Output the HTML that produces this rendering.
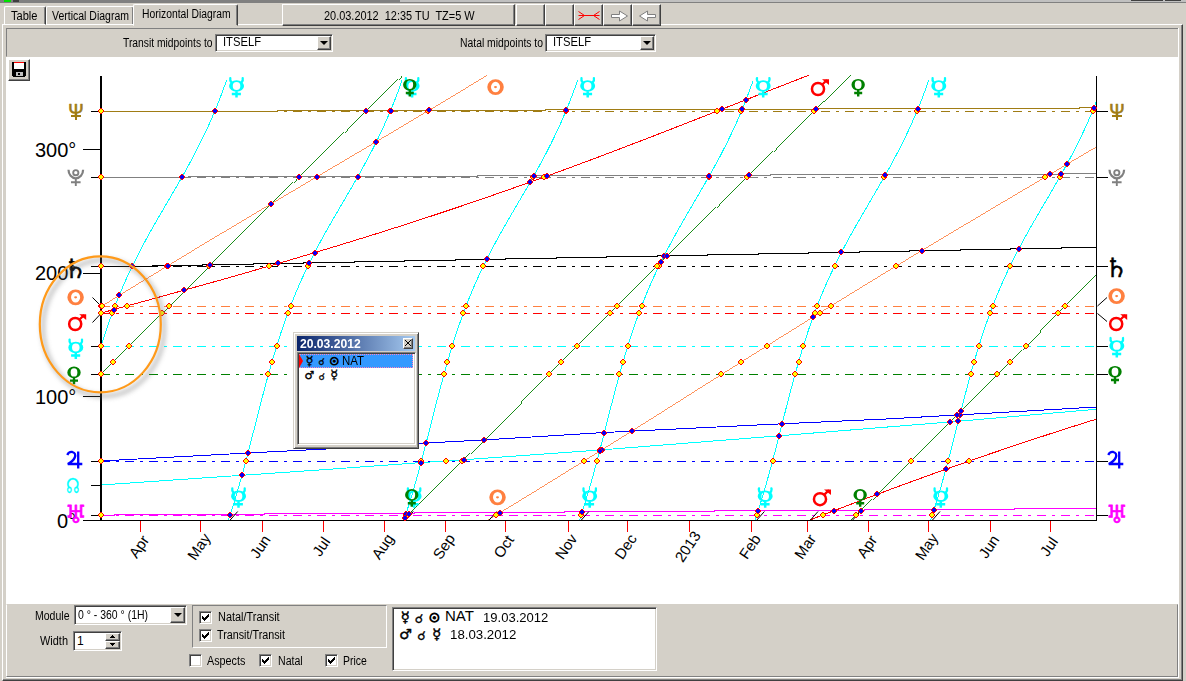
<!DOCTYPE html><html><head><meta charset="utf-8"><title>Horizontal Diagram</title><style>
*{box-sizing:border-box}
html,body{margin:0;padding:0}
body{width:1186px;height:681px;overflow:hidden;position:relative;background:#d4d0c8;font:11px "Liberation Sans",sans-serif;color:#000}
.a{position:absolute}
.t{position:absolute;white-space:nowrap;line-height:13px}
.raised{border:1px solid;border-color:#fff #404040 #404040 #fff;box-shadow:inset -1px -1px 0 #808080}
.sunk{border:1px solid;border-color:#808080 #fff #fff #808080}
.field{background:#fff;border:1px solid;border-color:#808080 #fff #fff #808080;box-shadow:inset 1px 1px 0 #404040,inset -1px -1px 0 #d4d0c8}
.btn{background:#d4d0c8;border:1px solid;border-color:#fff #404040 #404040 #fff;box-shadow:inset -1px -1px 0 #808080}
.cb{position:absolute;width:13px;height:13px;background:#fff;border:1px solid;border-color:#808080 #fff #fff #808080;box-shadow:inset 1px 1px 0 #404040,inset -1px -1px 0 #d4d0c8}
.cb svg{position:absolute;left:2px;top:2px}
.arrow{position:absolute;width:0;height:0;border:4px solid transparent;border-top-color:#000;border-bottom-width:0}
svg text.ps{font:bold 20px "DejaVu Sans",sans-serif;text-anchor:middle;stroke-width:1.2px;stroke-linejoin:round}
svg text.mo{font:15px "Liberation Sans",sans-serif;fill:#000}
svg text.deg{font:20px "Liberation Sans",sans-serif;fill:#000}
svg text.psi{font:21px "Liberation Sans",sans-serif;text-anchor:middle;stroke-width:.7px}
svg text.nd{font:21px "DejaVu Sans",sans-serif;text-anchor:middle}
svg text.pl{font:bold 22px "DejaVu Sans",sans-serif;text-anchor:middle;stroke-width:1.2px;stroke-linejoin:round}
</style></head><body>
<div class="a" style="left:0;top:0;width:1186px;height:3px;background:#808080"></div>
<div class="a" style="left:0;top:0;width:1186px;height:2px;background:#c0c0c0"></div>
<div class="a" style="left:0;top:0;width:400px;height:3px;background:#808080"></div>
<div class="a" style="left:4px;top:0;width:7px;height:2px;background:#00e000"></div>
<div class="a" style="left:13px;top:0;width:6px;height:2px;background:#404040"></div>
<div class="a" style="left:1131px;top:0;width:32px;height:1px;background:#404040"></div>
<div class="a" style="left:1165px;top:0;width:16px;height:1px;background:#404040"></div>
<div class="a" style="left:2px;top:24px;width:1181px;height:657px;border:1px solid;border-color:#fff #404040 #404040 #fff;box-shadow:inset -1px -1px 0 #808080"></div>
<div class="a" style="left:4px;top:6px;width:42px;height:19px;border:1px solid;border-color:#fff #404040 transparent #fff;border-radius:2px 2px 0 0;box-shadow:inset -1px 0 0 #808080"></div>
<div class="t" style="left:11px;top:10px;font-size:12px;transform:scaleX(0.9237);transform-origin:0 0;">Table</div>
<div class="a" style="left:46px;top:6px;width:88px;height:19px;border:1px solid;border-color:#fff #404040 transparent #fff;border-radius:2px 2px 0 0;box-shadow:inset -1px 0 0 #808080"></div>
<div class="t" style="left:52px;top:10px;font-size:12px;transform:scaleX(0.8745);transform-origin:0 0;">Vertical Diagram</div>
<div class="a" style="left:133px;top:4px;width:105px;height:22px;background:#d4d0c8;border:1px solid;border-color:#fff #404040 #d4d0c8 #fff;border-radius:2px 2px 0 0;box-shadow:inset -1px 0 0 #808080"></div>
<div class="t" style="left:141.5px;top:8px;font-size:12px;transform:scaleX(0.8616);transform-origin:0 0;">Horizontal Diagram</div>
<div class="a btn" style="left:282px;top:4px;width:233px;height:22px"></div>
<div class="t" style="left:324px;top:10px;font-size:12px;transform:scaleX(0.9107);transform-origin:0 0;">20.03.2012&nbsp; 12:35 TU&nbsp; TZ=5 W</div>
<div class="a btn" style="left:516px;top:4px;width:29px;height:22px"></div>
<div class="a btn" style="left:545px;top:4px;width:29px;height:22px"></div>
<div class="a btn" style="left:574px;top:4px;width:29px;height:22px"></div>
<div class="a btn" style="left:603px;top:4px;width:29px;height:22px"></div>
<div class="a btn" style="left:632px;top:4px;width:29px;height:22px"></div>
<svg class="a" style="left:574px;top:4px" width="90" height="22" viewBox="0 0 90 22"><path d="M4.5 11.5H25.5M4.5 7.5l6 4l-6 4M25.500 7.5l-6 4l6 4" stroke="#f00" fill="none"/><path d="M37.5 10.500h8v-3.500l8 5l-8 5v-3.500h-8z" fill="#fff" stroke="#808080"/><path d="M81.500 10.500h-8v-3.500l-8 5l8 5v-3.500h8z" fill="#fff" stroke="#808080"/></svg>
<div class="a" style="left:6px;top:28px;width:1173px;height:29px;border:1px solid;border-color:#808080 #fff #d4d0c8 #808080"></div>
<div class="a" style="left:1178px;top:28px;width:1px;height:650px;background:#fff"></div>
<div class="a" style="left:6px;top:677px;width:1173px;height:1px;background:#fff"></div>
<div class="a" style="left:6px;top:604px;width:1172px;height:73px;border:1px solid;border-color:#d4d0c8 #808080 #808080 #fff"></div>
<div class="a" style="left:6px;top:57px;width:1172px;height:547px;background:#fff"></div>
<div class="t" style="left:122.5px;top:37px;font-size:12px;transform:scaleX(0.8585);transform-origin:0 0;">Transit midpoints to</div>
<div class="a field" style="left:215px;top:34px;width:118px;height:18px"></div>
<div class="t" style="left:222.5px;top:36px;font-size:12px;transform:scaleX(0.9347);transform-origin:0 0;">ITSELF</div>
<div class="a btn" style="left:317px;top:36px;width:14px;height:14px"></div><div class="arrow" style="left:320px;top:41px"></div>
<div class="t" style="left:459.5px;top:37px;font-size:12px;transform:scaleX(0.8643);transform-origin:0 0;">Natal midpoints to</div>
<div class="a field" style="left:545px;top:34px;width:111px;height:18px"></div>
<div class="t" style="left:552.5px;top:36px;font-size:12px;transform:scaleX(0.9347);transform-origin:0 0;">ITSELF</div>
<div class="a btn" style="left:640px;top:36px;width:14px;height:14px"></div><div class="arrow" style="left:643px;top:41px"></div>
<div class="a btn" style="left:8px;top:59px;width:22px;height:22px"></div>
<svg class="a" style="left:11px;top:62px" width="16" height="16" viewBox="0 0 16 16" shape-rendering="crispEdges"><path d="M1 0h14v14h-1v1h-12v-1h-1z" fill="#000"/><rect x="3" y="0" width="10" height="1" fill="#f00"/><rect x="3" y="1" width="10" height="6" fill="#fff"/><rect x="5" y="10" width="7" height="4" fill="#c0c0c0"/><rect x="7" y="11" width="2" height="2" fill="#000"/></svg>
<div class="t" style="left:34.5px;top:610px;font-size:12px;transform:scaleX(0.8765);transform-origin:0 0;">Module</div>
<div class="a field" style="left:74px;top:605px;width:113px;height:20px"></div>
<div class="t" style="left:77.5px;top:609px;font-size:12px;transform:scaleX(0.8721);transform-origin:0 0;">0 ° - 360 ° (1H)</div>
<div class="a btn" style="left:170px;top:607px;width:15px;height:16px"></div><div class="arrow" style="left:174px;top:613px"></div>
<div class="t" style="left:40px;top:635px;font-size:12px;transform:scaleX(0.9129);transform-origin:0 0;">Width</div>
<div class="a field" style="left:73px;top:631px;width:49px;height:20px"></div>
<div class="t" style="left:77px;top:635px;font-size:12px;">1</div>
<div class="a btn" style="left:105px;top:633px;width:15px;height:8px"></div><div class="a btn" style="left:105px;top:641px;width:15px;height:8px"></div>
<svg class="a" style="left:108px;top:635px" width="9" height="12" viewBox="0 0 9 12" shape-rendering="crispEdges"><path d="M4 0h1v1h1v1h1v1h-5v-1h1v-1h1zM2 8h5v1h-1v1h-1v1h-1v-1h-1v-1h-1z" fill="#000"/></svg>
<div class="a sunk" style="left:192px;top:605px;width:195px;height:43px"></div>
<div class="cb" style="left:199px;top:611px"><svg width="7" height="7" viewBox="0 0 7 7"><path d="M0 2v3l2 2l5-5v-3l-5 5z" fill="#000" shape-rendering="crispEdges"/></svg></div>
<div class="t" style="left:217.5px;top:611px;font-size:12px;transform:scaleX(0.9115);transform-origin:0 0;">Natal/Transit</div>
<div class="cb" style="left:199px;top:629px"><svg width="7" height="7" viewBox="0 0 7 7"><path d="M0 2v3l2 2l5-5v-3l-5 5z" fill="#000" shape-rendering="crispEdges"/></svg></div>
<div class="t" style="left:217.3px;top:629px;font-size:12px;transform:scaleX(0.8971);transform-origin:0 0;">Transit/Transit</div>
<div class="cb" style="left:189px;top:654px"></div>
<div class="t" style="left:207px;top:655px;font-size:12px;transform:scaleX(0.8999);transform-origin:0 0;">Aspects</div>
<div class="cb" style="left:259px;top:654px"><svg width="7" height="7" viewBox="0 0 7 7"><path d="M0 2v3l2 2l5-5v-3l-5 5z" fill="#000" shape-rendering="crispEdges"/></svg></div>
<div class="t" style="left:277.8px;top:655px;font-size:12px;transform:scaleX(0.8817);transform-origin:0 0;">Natal</div>
<div class="cb" style="left:325px;top:654px"><svg width="7" height="7" viewBox="0 0 7 7"><path d="M0 2v3l2 2l5-5v-3l-5 5z" fill="#000" shape-rendering="crispEdges"/></svg></div>
<div class="t" style="left:343.3px;top:655px;font-size:12px;transform:scaleX(0.8667);transform-origin:0 0;">Price</div>
<div class="a field" style="left:392px;top:607px;width:265px;height:64px"></div>
<div class="t" style="left:445px;top:607px;font-size:15px;line-height:18px">NAT</div>
<div class="t" style="left:482.5px;top:609.5px;font-size:13px;transform:scaleX(1.0032);transform-origin:0 0;line-height:16px;">19.03.2012</div>
<div class="t" style="left:449.6px;top:626.5px;font-size:13px;transform:scaleX(1.0201);transform-origin:0 0;line-height:16px;">18.03.2012</div>
<svg class="a" style="left:0;top:0" width="1186" height="681" viewBox="0 0 1186 681">
<text x="400.77" y="621.74" font-family="DejaVu Sans, sans-serif" font-weight="bold" font-size="14.40" fill="#000" stroke="#000" stroke-width="0.50" stroke-linejoin="round">☿</text>
<text x="414.73" y="622.59" font-family="DejaVu Sans, sans-serif" font-weight="normal" font-size="12.74" fill="#000" stroke="#000" stroke-width="0.30" stroke-linejoin="round">☌</text>
<text x="428.99" y="621.55" font-family="DejaVu Sans, sans-serif" font-weight="normal" font-size="11.97" fill="#000" stroke="#000" stroke-width="1.30" stroke-linejoin="round">☉</text>
<text x="399.32" y="638.84" font-family="DejaVu Sans, sans-serif" font-weight="bold" font-size="13.92" fill="#000" stroke="#000" stroke-width="0.50" stroke-linejoin="round">♂</text>
<text x="417.18" y="639.59" font-family="DejaVu Sans, sans-serif" font-weight="normal" font-size="12.74" fill="#000" stroke="#000" stroke-width="0.30" stroke-linejoin="round">☌</text>
<text x="432.21" y="638.60" font-family="DejaVu Sans, sans-serif" font-weight="bold" font-size="14.76" fill="#000" stroke="#000" stroke-width="0.50" stroke-linejoin="round">☿</text>
</svg>
<svg class="a" style="left:0;top:0" width="1186" height="681" viewBox="0 0 1186 681">
<defs><filter id="sh" x="-20%" y="-20%" width="150%" height="150%"><feGaussianBlur stdDeviation="2.500"/></filter></defs>
<line x1="101" y1="111.5" x2="1097" y2="111.5" stroke="#a07c14" stroke-width="1" stroke-dasharray="9 6 3 6" shape-rendering="crispEdges"/>
<line x1="101" y1="177.5" x2="1097" y2="177.5" stroke="#808080" stroke-width="1" stroke-dasharray="9 6 3 6" shape-rendering="crispEdges"/>
<line x1="101" y1="266.5" x2="1097" y2="266.5" stroke="#000000" stroke-width="1" stroke-dasharray="9 6 3 6" shape-rendering="crispEdges"/>
<line x1="101" y1="306.5" x2="1097" y2="306.5" stroke="#ff8040" stroke-width="1" stroke-dasharray="9 6 3 6" shape-rendering="crispEdges"/>
<line x1="101" y1="313.5" x2="1097" y2="313.5" stroke="#ff0000" stroke-width="1" stroke-dasharray="9 6 3 6" shape-rendering="crispEdges"/>
<line x1="101" y1="346.5" x2="1097" y2="346.5" stroke="#00ffff" stroke-width="1" stroke-dasharray="9 6 3 6" shape-rendering="crispEdges"/>
<line x1="101" y1="374.5" x2="1097" y2="374.5" stroke="#008000" stroke-width="1" stroke-dasharray="9 6 3 6" shape-rendering="crispEdges"/>
<line x1="101" y1="461.5" x2="1097" y2="461.5" stroke="#0000ff" stroke-width="1" stroke-dasharray="9 6 3 6" shape-rendering="crispEdges"/>
<line x1="101" y1="515.5" x2="1097" y2="515.5" stroke="#ff00ff" stroke-width="1" stroke-dasharray="9 6 3 6" shape-rendering="crispEdges"/>
<path d="M101 266.5H153M152 265.5H203M202 264.5H254M253 263.5H304M303 262.5H355M354 261.5H405M404 260.5H456M455 259.5H506M505 258.5H557M556 257.5H607M606 256.5H658M657 255.5H708M707 254.5H759M758 253.5H809M808 252.5H860M859 251.5H910M909 250.5H961M960 249.5H1011M1010 248.5H1062M1061 247.5H1097" stroke="#000000" stroke-width="1" fill="none" shape-rendering="crispEdges"/>
<polyline points="101.0,461.0 248.0,453.0 326.0,449.0 426.0,443.0 483.0,440.0 604.5,432.5 782.0,423.8 890.0,418.8 1097.0,407.0" fill="none" stroke="#0000ff" stroke-width="1" shape-rendering="crispEdges"/>
<polyline points="101.0,485.0 326.0,469.5 421.0,462.6 446.0,461.0 600.0,450.0 779.0,435.8 890.0,426.8 950.0,422.0 1097.0,409.2" fill="none" stroke="#00ffff" stroke-width="1" shape-rendering="crispEdges"/>
<path d="M101 515.5H115M114 514.5H265M264 513.5H415M414 512.5H565M564 511.5H715M714 510.5H865M864 509.5H1015M1014 508.5H1097" stroke="#ff00ff" stroke-width="1" fill="none" shape-rendering="crispEdges"/>
<path d="M101 111.5H278M277 110.5H546M545 109.5H815M814 108.5H1080M1079 107.5H1097" stroke="#a07c14" stroke-width="1" fill="none" shape-rendering="crispEdges"/>
<path d="M101 177.5H189M188 176.5H478M477 175.5H771M770 174.5H1061M1060 173.5H1097" stroke="#808080" stroke-width="1" fill="none" shape-rendering="crispEdges"/>
<polyline points="101.0,346.5 104.0,337.0 107.0,328.0 110.0,319.4 113.0,311.2 116.0,303.3 119.0,295.9 122.0,288.7 125.0,281.8 128.0,275.2 131.0,268.8 134.0,262.7 137.0,256.7 140.0,250.9 143.0,245.2 146.0,239.6 149.0,234.2 152.0,228.8 155.0,223.6 158.0,218.3 161.0,213.2 164.0,208.0 167.0,202.9 170.0,197.8 173.0,192.6 176.0,187.5 179.0,182.3 182.0,177.0 185.0,171.7 188.0,166.3 191.0,160.8 194.0,155.1 197.0,149.4 200.0,143.4 203.0,137.3 206.0,131.0 209.0,124.5 212.0,117.7 215.0,110.6 218.0,103.2 221.0,95.5 224.0,87.4 226.5,80.5" fill="none" stroke="#00ffff" stroke-width="1" shape-rendering="crispEdges"/>
<polyline points="228.2,520.5 230.0,515.3 233.0,505.9 236.0,496.2 239.0,485.9 242.0,475.3 245.0,464.3 248.0,452.9 251.0,441.3 254.0,429.6 257.0,417.8 260.0,406.1 263.0,394.5 266.0,383.2 269.0,372.3 272.0,361.7 275.0,351.6 278.0,341.9 281.0,332.6 284.0,323.8 287.0,315.4 290.0,307.4 293.0,299.7 296.0,292.4 299.0,285.3 302.0,278.6 305.0,272.1 308.0,265.8 311.0,259.7 314.0,253.8 317.0,248.1 320.0,242.5 323.0,237.0 326.0,231.6 329.0,226.3 332.0,221.0 335.0,215.8 338.0,210.7 341.0,205.6 344.0,200.4 347.0,195.3 350.0,190.2 353.0,185.0 356.0,179.8 359.0,174.5 362.0,169.1 365.0,163.6 368.0,158.1 371.0,152.4 374.0,146.5 377.0,140.5 380.0,134.3 383.0,127.9 386.0,121.2 389.0,114.3 392.0,107.1 395.0,99.6 398.0,91.7 401.0,83.4 402.0,80.5" fill="none" stroke="#00ffff" stroke-width="1" shape-rendering="crispEdges"/>
<polyline points="403.8,520.5 404.0,519.9 407.0,510.8 410.0,501.3 413.0,491.3 416.0,480.9 419.0,470.0 422.0,458.8 425.0,447.4 428.0,435.7 431.0,423.9 434.0,412.1 437.0,400.5 440.0,389.0 443.0,377.9 446.0,367.1 449.0,356.7 452.0,346.8 455.0,337.3 458.0,328.3 461.0,319.7 464.0,311.5 467.0,303.6 470.0,296.1 473.0,288.9 476.0,282.1 479.0,275.4 482.0,269.0 485.0,262.9 488.0,256.9 491.0,251.0 494.0,245.4 497.0,239.8 500.0,234.4 503.0,229.0 506.0,223.7 509.0,218.5 512.0,213.4 515.0,208.2 518.0,203.1 521.0,198.0 524.0,192.8 527.0,187.7 530.0,182.5 533.0,177.2 536.0,171.9 539.0,166.5 542.0,161.0 545.0,155.3 548.0,149.6 551.0,143.7 554.0,137.5 557.0,131.2 560.0,124.7 563.0,117.9 566.0,110.9 569.0,103.5 572.0,95.8 575.0,87.7 577.6,80.5" fill="none" stroke="#00ffff" stroke-width="1" shape-rendering="crispEdges"/>
<polyline points="579.4,520.5 581.0,515.6 584.0,506.3 587.0,496.5 590.0,486.3 593.0,475.7 596.0,464.7 599.0,453.3 602.0,441.7 605.0,430.0 608.0,418.2 611.0,406.5 614.0,394.9 617.0,383.6 620.0,372.6 623.0,362.0 626.0,351.9 629.0,342.2 632.0,332.9 635.0,324.1 638.0,315.7 641.0,307.6 644.0,299.9 647.0,292.6 650.0,285.6 653.0,278.8 656.0,272.3 659.0,266.0 662.0,259.9 665.0,254.0 668.0,248.3 671.0,242.7 674.0,237.2 677.0,231.8 680.0,226.5 683.0,221.2 686.0,216.0 689.0,210.9 692.0,205.7 695.0,200.6 698.0,195.5 701.0,190.3 704.0,185.2 707.0,179.9 710.0,174.6 713.0,169.3 716.0,163.8 719.0,158.3 722.0,152.6 725.0,146.7 728.0,140.7 731.0,134.5 734.0,128.1 737.0,121.5 740.0,114.6 743.0,107.3 746.0,99.8 749.0,91.9 752.0,83.7 753.1,80.5" fill="none" stroke="#00ffff" stroke-width="1" shape-rendering="crispEdges"/>
<polyline points="754.9,520.5 755.0,520.2 758.0,511.1 761.0,501.6 764.0,491.6 767.0,481.2 770.0,470.4 773.0,459.2 776.0,447.8 779.0,436.1 782.0,424.3 785.0,412.5 788.0,400.9 791.0,389.4 794.0,378.3 797.0,367.5 800.0,357.1 803.0,347.1 806.0,337.7 809.0,328.6 812.0,320.0 815.0,311.7 818.0,303.9 821.0,296.4 824.0,289.2 827.0,282.3 830.0,275.7 833.0,269.3 836.0,263.1 839.0,257.1 842.0,251.2 845.0,245.6 848.0,240.0 851.0,234.6 854.0,229.2 857.0,223.9 860.0,218.7 863.0,213.5 866.0,208.4 869.0,203.3 872.0,198.1 875.0,193.0 878.0,187.8 881.0,182.6 884.0,177.4 887.0,172.1 890.0,166.7 893.0,161.2 896.0,155.5 899.0,149.8 902.0,143.9 905.0,137.8 908.0,131.5 911.0,124.9 914.0,118.2 917.0,111.1 920.0,103.8 923.0,96.1 926.0,88.0 928.7,80.5" fill="none" stroke="#00ffff" stroke-width="1" shape-rendering="crispEdges"/>
<polyline points="930.5,520.5 932.0,515.9 935.0,506.6 938.0,496.8 941.0,486.7 944.0,476.0 947.0,465.1 950.0,453.7 953.0,442.1 956.0,430.4 959.0,418.6 962.0,406.9 965.0,395.3 968.0,384.0 971.0,373.0 974.0,362.4 977.0,352.2 980.0,342.5 983.0,333.2 986.0,324.4 989.0,315.9 992.0,307.9 995.0,300.2 998.0,292.9 1001.0,285.8 1004.0,279.1 1007.0,272.5 1010.0,266.2 1013.0,260.2 1016.0,254.2 1019.0,248.5 1022.0,242.9 1025.0,237.4 1028.0,232.0 1031.0,226.6 1034.0,221.4 1037.0,216.2 1040.0,211.0 1043.0,205.9 1046.0,200.8 1049.0,195.7 1052.0,190.5 1055.0,185.3 1058.0,180.1 1061.0,174.8 1064.0,169.5 1067.0,164.0 1070.0,158.5 1073.0,152.8 1076.0,146.9 1079.0,140.9 1082.0,134.7 1085.0,128.3 1088.0,121.7 1091.0,114.8 1094.0,107.6 1097.0,100.1" fill="none" stroke="#00ffff" stroke-width="1" shape-rendering="crispEdges"/>
<polyline points="101.0,373.9 104.0,370.9 107.0,367.9 110.0,364.8 113.0,361.8 116.0,358.8 119.0,355.8 122.0,352.8 125.0,349.7 128.0,346.7 131.0,343.7 134.0,340.7 137.0,337.7 140.0,334.7 143.0,331.6 146.0,328.6 149.0,325.6 152.0,322.6 155.0,319.6 158.0,316.6 161.0,313.6 164.0,310.5 167.0,307.5 170.0,304.5 173.0,301.5 176.0,298.5 179.0,295.5 182.0,292.5 185.0,289.5 188.0,286.5 191.0,283.5 194.0,280.5 197.0,277.5 200.0,274.5 203.0,271.5 206.0,268.5 209.0,265.5 212.0,262.5 215.0,259.6 218.0,256.6 221.0,253.6 224.0,250.6 227.0,247.6 230.0,244.6 233.0,241.7 236.0,238.7 239.0,235.7 242.0,232.7 245.0,229.8 248.0,226.8 251.0,223.8 254.0,220.9 257.0,217.9 260.0,215.0 263.0,212.0 266.0,209.0 269.0,206.1 272.0,203.1 275.0,200.2 278.0,197.2 281.0,194.3 284.0,191.3 287.0,188.4 290.0,185.4 293.0,182.5 296.0,179.5 299.0,176.6 302.0,173.6 305.0,170.7 308.0,167.7 311.0,164.8 314.0,161.9 317.0,158.9 320.0,156.0 323.0,153.0 326.0,150.1 329.0,147.2 332.0,144.2 335.0,141.3 338.0,138.3 341.0,135.4 344.0,132.5 347.0,129.5 350.0,126.6 353.0,123.6 356.0,120.7 359.0,117.8 362.0,114.8 365.0,111.9 368.0,108.9 371.0,106.0 374.0,103.1 377.0,100.1 380.0,97.2 383.0,94.2 386.0,91.3 389.0,88.3 392.0,85.4 395.0,82.4 398.0,79.5 401.0,76.5 402.3,75.3" fill="none" stroke="#008000" stroke-width="0.9" shape-rendering="crispEdges"/>
<polyline points="402.3,520.5 404.0,518.8 407.0,515.8 410.0,512.9 413.0,509.9 416.0,507.0 419.0,504.0 422.0,501.0 425.0,498.1 428.0,495.1 431.0,492.2 434.0,489.2 437.0,486.2 440.0,483.3 443.0,480.3 446.0,477.3 449.0,474.3 452.0,471.4 455.0,468.4 458.0,465.4 461.0,462.4 464.0,459.4 467.0,456.4 470.0,453.5 473.0,450.5 476.0,447.5 479.0,444.5 482.0,441.5 485.0,438.5 488.0,435.5 491.0,432.5 494.0,429.5 497.0,426.5 500.0,423.5 503.0,420.5 506.0,417.5 509.0,414.5 512.0,411.5 515.0,408.5 518.0,405.5 521.0,402.5 524.0,399.4 527.0,396.4 530.0,393.4 533.0,390.4 536.0,387.4 539.0,384.4 542.0,381.4 545.0,378.3 548.0,375.3 551.0,372.3 554.0,369.3 557.0,366.3 560.0,363.2 563.0,360.2 566.0,357.2 569.0,354.2 572.0,351.2 575.0,348.1 578.0,345.1 581.0,342.1 584.0,339.1 587.0,336.1 590.0,333.1 593.0,330.0 596.0,327.0 599.0,324.0 602.0,321.0 605.0,318.0 608.0,315.0 611.0,312.0 614.0,308.9 617.0,305.9 620.0,302.9 623.0,299.9 626.0,296.9 629.0,293.9 632.0,290.9 635.0,287.9 638.0,284.9 641.0,281.9 644.0,278.9 647.0,275.9 650.0,272.9 653.0,269.9 656.0,266.9 659.0,263.9 662.0,261.0 665.0,258.0 668.0,255.0 671.0,252.0 674.0,249.0 677.0,246.0 680.0,243.1 683.0,240.1 686.0,237.1 689.0,234.1 692.0,231.2 695.0,228.2 698.0,225.2 701.0,222.3 704.0,219.3 707.0,216.3 710.0,213.4 713.0,210.4 716.0,207.5 719.0,204.5 722.0,201.6 725.0,198.6 728.0,195.6 731.0,192.7 734.0,189.7 737.0,186.8 740.0,183.8 743.0,180.9 746.0,178.0 749.0,175.0 752.0,172.1 755.0,169.1 758.0,166.2 761.0,163.2 764.0,160.3 767.0,157.4 770.0,154.4 773.0,151.5 776.0,148.5 779.0,145.6 782.0,142.7 785.0,139.7 788.0,136.8 791.0,133.8 794.0,130.9 797.0,128.0 800.0,125.0 803.0,122.1 806.0,119.1 809.0,116.2 812.0,113.3 815.0,110.3 818.0,107.4 821.0,104.4 824.0,101.5 827.0,98.6 830.0,95.6 833.0,92.7 836.0,89.7 839.0,86.8 842.0,83.8 845.0,80.9 848.0,77.9 850.7,75.3" fill="none" stroke="#008000" stroke-width="0.9" shape-rendering="crispEdges"/>
<polyline points="850.7,520.5 851.0,520.2 854.0,517.2 857.0,514.3 860.0,511.3 863.0,508.4 866.0,505.4 869.0,502.4 872.0,499.5 875.0,496.5 878.0,493.5 881.0,490.6 884.0,487.6 887.0,484.6 890.0,481.7 893.0,478.7 896.0,475.7 899.0,472.8 902.0,469.8 905.0,466.8 908.0,463.8 911.0,460.8 914.0,457.8 917.0,454.9 920.0,451.9 923.0,448.9 926.0,445.9 929.0,442.9 932.0,439.9 935.0,436.9 938.0,433.9 941.0,430.9 944.0,427.9 947.0,424.9 950.0,421.9 953.0,418.9 956.0,415.9 959.0,412.9 962.0,409.9 965.0,406.9 968.0,403.9 971.0,400.9 974.0,397.8 977.0,394.8 980.0,391.8 983.0,388.8 986.0,385.8 989.0,382.8 992.0,379.8 995.0,376.7 998.0,373.7 1001.0,370.7 1004.0,367.7 1007.0,364.7 1010.0,361.6 1013.0,358.6 1016.0,355.6 1019.0,352.6 1022.0,349.6 1025.0,346.5 1028.0,343.5 1031.0,340.5 1034.0,337.5 1037.0,334.5 1040.0,331.5 1043.0,328.4 1046.0,325.4 1049.0,322.4 1052.0,319.4 1055.0,316.4 1058.0,313.4 1061.0,310.4 1064.0,307.4 1067.0,304.3 1070.0,301.3 1073.0,298.3 1076.0,295.3 1079.0,292.3 1082.0,289.3 1085.0,286.3 1088.0,283.3 1091.0,280.3 1094.0,277.3 1097.0,274.3" fill="none" stroke="#008000" stroke-width="0.9" shape-rendering="crispEdges"/>
<polyline points="101.0,306.7 104.0,304.8 107.0,303.0 110.0,301.1 113.0,299.3 116.0,297.4 119.0,295.6 122.0,293.7 125.0,291.9 128.0,290.1 131.0,288.2 134.0,286.4 137.0,284.5 140.0,282.7 143.0,280.9 146.0,279.0 149.0,277.2 152.0,275.4 155.0,273.6 158.0,271.7 161.0,269.9 164.0,268.1 167.0,266.3 170.0,264.4 173.0,262.6 176.0,260.8 179.0,259.0 182.0,257.2 185.0,255.4 188.0,253.6 191.0,251.8 194.0,249.9 197.0,248.1 200.0,246.3 203.0,244.5 206.0,242.7 209.0,240.9 212.0,239.1 215.0,237.3 218.0,235.5 221.0,233.7 224.0,232.0 227.0,230.2 230.0,228.4 233.0,226.6 236.0,224.8 239.0,223.0 242.0,221.2 245.0,219.4 248.0,217.6 251.0,215.9 254.0,214.1 257.0,212.3 260.0,210.5 263.0,208.7 266.0,206.9 269.0,205.2 272.0,203.4 275.0,201.6 278.0,199.8 281.0,198.0 284.0,196.3 287.0,194.5 290.0,192.7 293.0,190.9 296.0,189.2 299.0,187.4 302.0,185.6 305.0,183.8 308.0,182.1 311.0,180.3 314.0,178.5 317.0,176.8 320.0,175.0 323.0,173.2 326.0,171.4 329.0,169.7 332.0,167.9 335.0,166.1 338.0,164.4 341.0,162.6 344.0,160.8 347.0,159.0 350.0,157.3 353.0,155.5 356.0,153.7 359.0,151.9 362.0,150.2 365.0,148.4 368.0,146.6 371.0,144.8 374.0,143.1 377.0,141.3 380.0,139.5 383.0,137.7 386.0,135.9 389.0,134.2 392.0,132.4 395.0,130.6 398.0,128.8 401.0,127.0 404.0,125.3 407.0,123.5 410.0,121.7 413.0,119.9 416.0,118.1 419.0,116.3 422.0,114.5 425.0,112.7 428.0,111.0 431.0,109.2 434.0,107.4 437.0,105.6 440.0,103.8 443.0,102.0 446.0,100.2 449.0,98.4 452.0,96.6 455.0,94.8 458.0,93.0 461.0,91.2 464.0,89.4 467.0,87.5 470.0,85.7 473.0,83.9 476.0,82.1 479.0,80.3 482.0,78.5 485.0,76.7 487.2,75.3" fill="none" stroke="#ff8040" stroke-width="0.86" shape-rendering="crispEdges"/>
<polyline points="487.2,520.5 488.0,520.0 491.0,518.2 494.0,516.4 497.0,514.6 500.0,512.7 503.0,510.9 506.0,509.1 509.0,507.3 512.0,505.4 515.0,503.6 518.0,501.8 521.0,499.9 524.0,498.1 527.0,496.3 530.0,494.4 533.0,492.6 536.0,490.7 539.0,488.9 542.0,487.0 545.0,485.2 548.0,483.3 551.0,481.5 554.0,479.6 557.0,477.8 560.0,475.9 563.0,474.1 566.0,472.2 569.0,470.3 572.0,468.5 575.0,466.6 578.0,464.7 581.0,462.9 584.0,461.0 587.0,459.1 590.0,457.3 593.0,455.4 596.0,453.5 599.0,451.7 602.0,449.8 605.0,447.9 608.0,446.0 611.0,444.1 614.0,442.3 617.0,440.4 620.0,438.5 623.0,436.6 626.0,434.7 629.0,432.8 632.0,431.0 635.0,429.1 638.0,427.2 641.0,425.3 644.0,423.4 647.0,421.5 650.0,419.6 653.0,417.7 656.0,415.8 659.0,414.0 662.0,412.1 665.0,410.2 668.0,408.3 671.0,406.4 674.0,404.5 677.0,402.6 680.0,400.7 683.0,398.8 686.0,396.9 689.0,395.0 692.0,393.1 695.0,391.2 698.0,389.3 701.0,387.4 704.0,385.5 707.0,383.6 710.0,381.8 713.0,379.9 716.0,378.0 719.0,376.1 722.0,374.2 725.0,372.3 728.0,370.4 731.0,368.5 734.0,366.6 737.0,364.7 740.0,362.8 743.0,360.9 746.0,359.1 749.0,357.2 752.0,355.3 755.0,353.4 758.0,351.5 761.0,349.6 764.0,347.7 767.0,345.9 770.0,344.0 773.0,342.1 776.0,340.2 779.0,338.3 782.0,336.5 785.0,334.6 788.0,332.7 791.0,330.8 794.0,329.0 797.0,327.1 800.0,325.2 803.0,323.4 806.0,321.5 809.0,319.6 812.0,317.8 815.0,315.9 818.0,314.0 821.0,312.2 824.0,310.3 827.0,308.5 830.0,306.6 833.0,304.8 836.0,302.9 839.0,301.1 842.0,299.2 845.0,297.4 848.0,295.5 851.0,293.7 854.0,291.8 857.0,290.0 860.0,288.2 863.0,286.3 866.0,284.5 869.0,282.6 872.0,280.8 875.0,279.0 878.0,277.2 881.0,275.3 884.0,273.5 887.0,271.7 890.0,269.9 893.0,268.0 896.0,266.2 899.0,264.4 902.0,262.6 905.0,260.8 908.0,258.9 911.0,257.1 914.0,255.3 917.0,253.5 920.0,251.7 923.0,249.9 926.0,248.1 929.0,246.3 932.0,244.5 935.0,242.7 938.0,240.9 941.0,239.1 944.0,237.3 947.0,235.5 950.0,233.7 953.0,231.9 956.0,230.1 959.0,228.3 962.0,226.5 965.0,224.7 968.0,222.9 971.0,221.2 974.0,219.4 977.0,217.6 980.0,215.8 983.0,214.0 986.0,212.2 989.0,210.4 992.0,208.7 995.0,206.9 998.0,205.1 1001.0,203.3 1004.0,201.5 1007.0,199.8 1010.0,198.0 1013.0,196.2 1016.0,194.4 1019.0,192.7 1022.0,190.9 1025.0,189.1 1028.0,187.3 1031.0,185.6 1034.0,183.8 1037.0,182.0 1040.0,180.2 1043.0,178.5 1046.0,176.7 1049.0,174.9 1052.0,173.2 1055.0,171.4 1058.0,169.6 1061.0,167.8 1064.0,166.1 1067.0,164.3 1070.0,162.5 1073.0,160.7 1076.0,159.0 1079.0,157.2 1082.0,155.4 1085.0,153.7 1088.0,151.9 1091.0,150.1 1094.0,148.3 1097.0,146.6" fill="none" stroke="#ff8040" stroke-width="0.86" shape-rendering="crispEdges"/>
<polyline points="101.0,313.0 104.0,312.2 107.0,311.4 110.0,310.6 113.0,309.7 116.0,308.9 119.0,308.1 122.0,307.3 125.0,306.5 128.0,305.6 131.0,304.8 134.0,304.0 137.0,303.2 140.0,302.4 143.0,301.5 146.0,300.7 149.0,299.9 152.0,299.1 155.0,298.2 158.0,297.4 161.0,296.6 164.0,295.8 167.0,294.9 170.0,294.1 173.0,293.3 176.0,292.4 179.0,291.6 182.0,290.8 185.0,290.0 188.0,289.1 191.0,288.3 194.0,287.4 197.0,286.6 200.0,285.8 203.0,284.9 206.0,284.1 209.0,283.2 212.0,282.4 215.0,281.6 218.0,280.7 221.0,279.9 224.0,279.0 227.0,278.2 230.0,277.3 233.0,276.5 236.0,275.6 239.0,274.7 242.0,273.9 245.0,273.0 248.0,272.2 251.0,271.3 254.0,270.4 257.0,269.6 260.0,268.7 263.0,267.8 266.0,267.0 269.0,266.1 272.0,265.2 275.0,264.4 278.0,263.5 281.0,262.6 284.0,261.7 287.0,260.9 290.0,260.0 293.0,259.1 296.0,258.2 299.0,257.3 302.0,256.4 305.0,255.5 308.0,254.6 311.0,253.7 314.0,252.8 317.0,251.9 320.0,251.0 323.0,250.1 326.0,249.2 329.0,248.3 332.0,247.4 335.0,246.5 338.0,245.6 341.0,244.7 344.0,243.8 347.0,242.8 350.0,241.9 353.0,241.0 356.0,240.1 359.0,239.1 362.0,238.2 365.0,237.3 368.0,236.3 371.0,235.4 374.0,234.5 377.0,233.5 380.0,232.6 383.0,231.6 386.0,230.7 389.0,229.7 392.0,228.8 395.0,227.8 398.0,226.9 401.0,225.9 404.0,224.9 407.0,224.0 410.0,223.0 413.0,222.0 416.0,221.1 419.0,220.1 422.0,219.1 425.0,218.1 428.0,217.1 431.0,216.2 434.0,215.2 437.0,214.2 440.0,213.2 443.0,212.2 446.0,211.2 449.0,210.2 452.0,209.2 455.0,208.2 458.0,207.2 461.0,206.2 464.0,205.1 467.0,204.1 470.0,203.1 473.0,202.1 476.0,201.1 479.0,200.0 482.0,199.0 485.0,198.0 488.0,196.9 491.0,195.9 494.0,194.8 497.0,193.8 500.0,192.8 503.0,191.7 506.0,190.7 509.0,189.6 512.0,188.5 515.0,187.5 518.0,186.4 521.0,185.4 524.0,184.3 527.0,183.2 530.0,182.1 533.0,181.1 536.0,180.0 539.0,178.9 542.0,177.8 545.0,176.7 548.0,175.7 551.0,174.6 554.0,173.5 557.0,172.4 560.0,171.3 563.0,170.2 566.0,169.1 569.0,168.0 572.0,166.9 575.0,165.7 578.0,164.6 581.0,163.5 584.0,162.4 587.0,161.3 590.0,160.2 593.0,159.0 596.0,157.9 599.0,156.8 602.0,155.7 605.0,154.5 608.0,153.4 611.0,152.3 614.0,151.1 617.0,150.0 620.0,148.8 623.0,147.7 626.0,146.5 629.0,145.4 632.0,144.2 635.0,143.1 638.0,141.9 641.0,140.8 644.0,139.6 647.0,138.5 650.0,137.3 653.0,136.2 656.0,135.0 659.0,133.8 662.0,132.7 665.0,131.5 668.0,130.3 671.0,129.2 674.0,128.0 677.0,126.8 680.0,125.7 683.0,124.5 686.0,123.3 689.0,122.1 692.0,121.0 695.0,119.8 698.0,118.6 701.0,117.4 704.0,116.3 707.0,115.1 710.0,113.9 713.0,112.7 716.0,111.5 719.0,110.4 722.0,109.2 725.0,108.0 728.0,106.8 731.0,105.6 734.0,104.5 737.0,103.3 740.0,102.1 743.0,100.9 746.0,99.7 749.0,98.6 752.0,97.4 755.0,96.2 758.0,95.0 761.0,93.9 764.0,92.7 767.0,91.5 770.0,90.3 773.0,89.1 776.0,88.0 779.0,86.8 782.0,85.6 785.0,84.5 788.0,83.3 791.0,82.1 794.0,80.9 797.0,79.8 800.0,78.6 803.0,77.4 806.0,76.3 808.5,75.3" fill="none" stroke="#ff0000" stroke-width="1" shape-rendering="crispEdges"/>
<polyline points="808.5,520.5 809.0,520.3 812.0,519.2 815.0,518.0 818.0,516.8 821.0,515.7 824.0,514.5 827.0,513.4 830.0,512.2 833.0,511.1 836.0,509.9 839.0,508.8 842.0,507.6 845.0,506.5 848.0,505.3 851.0,504.2 854.0,503.0 857.0,501.9 860.0,500.8 863.0,499.6 866.0,498.5 869.0,497.4 872.0,496.3 875.0,495.1 878.0,494.0 881.0,492.9 884.0,491.8 887.0,490.7 890.0,489.5 893.0,488.4 896.0,487.3 899.0,486.2 902.0,485.1 905.0,484.0 908.0,482.9 911.0,481.8 914.0,480.7 917.0,479.6 920.0,478.5 923.0,477.5 926.0,476.4 929.0,475.3 932.0,474.2 935.0,473.1 938.0,472.1 941.0,471.0 944.0,469.9 947.0,468.9 950.0,467.8 953.0,466.7 956.0,465.7 959.0,464.6 962.0,463.6 965.0,462.5 968.0,461.5 971.0,460.4 974.0,459.4 977.0,458.4 980.0,457.3 983.0,456.3 986.0,455.3 989.0,454.2 992.0,453.2 995.0,452.2 998.0,451.2 1001.0,450.1 1004.0,449.1 1007.0,448.1 1010.0,447.1 1013.0,446.1 1016.0,445.1 1019.0,444.1 1022.0,443.1 1025.0,442.1 1028.0,441.1 1031.0,440.1 1034.0,439.1 1037.0,438.1 1040.0,437.1 1043.0,436.2 1046.0,435.2 1049.0,434.2 1052.0,433.2 1055.0,432.3 1058.0,431.3 1061.0,430.3 1064.0,429.4 1067.0,428.4 1070.0,427.4 1073.0,426.5 1076.0,425.5 1079.0,424.6 1082.0,423.6 1085.0,422.7 1088.0,421.7 1091.0,420.8 1094.0,419.9 1097.0,418.9" fill="none" stroke="#ff0000" stroke-width="1" shape-rendering="crispEdges"/>
<line x1="230.2" y1="520" x2="237.7" y2="511.500" stroke="#000" stroke-width="1"/>
<line x1="405.8" y1="520" x2="413.3" y2="511.500" stroke="#000" stroke-width="1"/>
<line x1="581.4" y1="520" x2="588.9" y2="511.500" stroke="#000" stroke-width="1"/>
<line x1="756.9" y1="520" x2="764.4" y2="511.500" stroke="#000" stroke-width="1"/>
<line x1="932.5" y1="520" x2="940.0" y2="511.500" stroke="#000" stroke-width="1"/>
<line x1="404.3" y1="520" x2="411.8" y2="511.500" stroke="#000" stroke-width="1"/>
<line x1="852.7" y1="520" x2="860.2" y2="511.500" stroke="#000" stroke-width="1"/>
<line x1="489.2" y1="520" x2="496.7" y2="511.500" stroke="#000" stroke-width="1"/>
<line x1="810.5" y1="520" x2="818.0" y2="511.500" stroke="#000" stroke-width="1"/>
<path fill-rule="evenodd" fill="#00ffff" d="M229.05 86.00a7.50 5.80 0 1 0 15.00 0a7.50 5.80 0 1 0 -15.00 0zM232.75 86.00a3.80 3.90 0 1 0 7.60 0a3.80 3.90 0 1 0 -7.60 0z"/><path d="M231.5 82.4q-1.800 -1.800 -1.200 -4.300M241.5 82.4q1.800 -1.800 1.200 -4.300" fill="none" stroke="#00ffff" stroke-width="2.300" stroke-linecap="round"/><path d="M236.5 91.3v6.300M231.8 94.1h9.100" fill="none" stroke="#00ffff" stroke-width="2.500"/>
<path fill-rule="evenodd" fill="#00ffff" d="M231.05 496.20a7.50 5.80 0 1 0 15.00 0a7.50 5.80 0 1 0 -15.00 0zM234.75 496.20a3.80 3.90 0 1 0 7.60 0a3.80 3.90 0 1 0 -7.60 0z"/><path d="M233.5 492.6q-1.800 -1.800 -1.200 -4.300M243.5 492.6q1.800 -1.800 1.200 -4.300" fill="none" stroke="#00ffff" stroke-width="2.300" stroke-linecap="round"/><path d="M238.5 501.5v6.300M233.8 504.3h9.100" fill="none" stroke="#00ffff" stroke-width="2.500"/>
<path fill-rule="evenodd" fill="#00ffff" d="M404.60 86.00a7.50 5.80 0 1 0 15.00 0a7.50 5.80 0 1 0 -15.00 0zM408.30 86.00a3.80 3.90 0 1 0 7.60 0a3.80 3.90 0 1 0 -7.60 0z"/><path d="M407.1 82.4q-1.800 -1.800 -1.200 -4.300M417.1 82.4q1.800 -1.800 1.200 -4.300" fill="none" stroke="#00ffff" stroke-width="2.300" stroke-linecap="round"/><path d="M412.1 91.3v6.300M407.4 94.1h9.100" fill="none" stroke="#00ffff" stroke-width="2.500"/>
<path fill-rule="evenodd" fill="#00ffff" d="M406.60 496.20a7.50 5.80 0 1 0 15.00 0a7.50 5.80 0 1 0 -15.00 0zM410.30 496.20a3.80 3.90 0 1 0 7.60 0a3.80 3.90 0 1 0 -7.60 0z"/><path d="M409.1 492.6q-1.800 -1.800 -1.200 -4.300M419.1 492.6q1.800 -1.800 1.200 -4.300" fill="none" stroke="#00ffff" stroke-width="2.300" stroke-linecap="round"/><path d="M414.1 501.5v6.300M409.4 504.3h9.100" fill="none" stroke="#00ffff" stroke-width="2.500"/>
<path fill-rule="evenodd" fill="#00ffff" d="M580.15 86.00a7.50 5.80 0 1 0 15.00 0a7.50 5.80 0 1 0 -15.00 0zM583.85 86.00a3.80 3.90 0 1 0 7.60 0a3.80 3.90 0 1 0 -7.60 0z"/><path d="M582.7 82.4q-1.800 -1.800 -1.200 -4.300M592.7 82.4q1.800 -1.800 1.200 -4.300" fill="none" stroke="#00ffff" stroke-width="2.300" stroke-linecap="round"/><path d="M587.7 91.3v6.300M583.0 94.1h9.100" fill="none" stroke="#00ffff" stroke-width="2.500"/>
<path fill-rule="evenodd" fill="#00ffff" d="M582.15 496.20a7.50 5.80 0 1 0 15.00 0a7.50 5.80 0 1 0 -15.00 0zM585.85 496.20a3.80 3.90 0 1 0 7.60 0a3.80 3.90 0 1 0 -7.60 0z"/><path d="M584.7 492.6q-1.800 -1.800 -1.200 -4.300M594.7 492.6q1.800 -1.800 1.200 -4.300" fill="none" stroke="#00ffff" stroke-width="2.300" stroke-linecap="round"/><path d="M589.7 501.5v6.300M585.0 504.3h9.100" fill="none" stroke="#00ffff" stroke-width="2.500"/>
<path fill-rule="evenodd" fill="#00ffff" d="M755.70 86.00a7.50 5.80 0 1 0 15.00 0a7.50 5.80 0 1 0 -15.00 0zM759.40 86.00a3.80 3.90 0 1 0 7.60 0a3.80 3.90 0 1 0 -7.60 0z"/><path d="M758.2 82.4q-1.800 -1.800 -1.200 -4.300M768.2 82.4q1.800 -1.800 1.200 -4.300" fill="none" stroke="#00ffff" stroke-width="2.300" stroke-linecap="round"/><path d="M763.2 91.3v6.300M758.5 94.1h9.100" fill="none" stroke="#00ffff" stroke-width="2.500"/>
<path fill-rule="evenodd" fill="#00ffff" d="M757.70 496.20a7.50 5.80 0 1 0 15.00 0a7.50 5.80 0 1 0 -15.00 0zM761.40 496.20a3.80 3.90 0 1 0 7.60 0a3.80 3.90 0 1 0 -7.60 0z"/><path d="M760.2 492.6q-1.800 -1.800 -1.200 -4.300M770.2 492.6q1.800 -1.800 1.200 -4.300" fill="none" stroke="#00ffff" stroke-width="2.300" stroke-linecap="round"/><path d="M765.2 501.5v6.300M760.5 504.3h9.100" fill="none" stroke="#00ffff" stroke-width="2.500"/>
<path fill-rule="evenodd" fill="#00ffff" d="M931.26 86.00a7.50 5.80 0 1 0 15.00 0a7.50 5.80 0 1 0 -15.00 0zM934.96 86.00a3.80 3.90 0 1 0 7.60 0a3.80 3.90 0 1 0 -7.60 0z"/><path d="M933.8 82.4q-1.800 -1.800 -1.200 -4.300M943.8 82.4q1.800 -1.800 1.200 -4.300" fill="none" stroke="#00ffff" stroke-width="2.300" stroke-linecap="round"/><path d="M938.8 91.3v6.300M934.1 94.1h9.100" fill="none" stroke="#00ffff" stroke-width="2.500"/>
<path fill-rule="evenodd" fill="#00ffff" d="M933.26 496.20a7.50 5.80 0 1 0 15.00 0a7.50 5.80 0 1 0 -15.00 0zM936.96 496.20a3.80 3.90 0 1 0 7.60 0a3.80 3.90 0 1 0 -7.60 0z"/><path d="M935.8 492.6q-1.800 -1.800 -1.200 -4.300M945.8 492.6q1.800 -1.800 1.200 -4.300" fill="none" stroke="#00ffff" stroke-width="2.300" stroke-linecap="round"/><path d="M940.8 501.5v6.300M936.1 504.3h9.100" fill="none" stroke="#00ffff" stroke-width="2.500"/>
<path fill-rule="evenodd" fill="#008000" d="M403.06 84.75a6.70 5.85 0 1 0 13.40 0a6.70 5.85 0 1 0 -13.40 0zM406.36 84.75a3.40 4.20 0 1 0 6.80 0a3.40 4.20 0 1 0 -6.80 0z"/><path d="M409.8 90.0v6.600M405.8 93.0h8" fill="none" stroke="#008000" stroke-width="2.400"/>
<path fill-rule="evenodd" fill="#008000" d="M405.06 494.95a6.70 5.85 0 1 0 13.40 0a6.70 5.85 0 1 0 -13.40 0zM408.36 494.95a3.40 4.20 0 1 0 6.80 0a3.40 4.20 0 1 0 -6.80 0z"/><path d="M411.8 500.2v6.600M407.8 503.2h8" fill="none" stroke="#008000" stroke-width="2.400"/>
<path fill-rule="evenodd" fill="#008000" d="M851.47 84.75a6.70 5.85 0 1 0 13.40 0a6.70 5.85 0 1 0 -13.40 0zM854.77 84.75a3.40 4.20 0 1 0 6.80 0a3.40 4.20 0 1 0 -6.80 0z"/><path d="M858.2 90.0v6.600M854.2 93.0h8" fill="none" stroke="#008000" stroke-width="2.400"/>
<path fill-rule="evenodd" fill="#008000" d="M853.47 494.95a6.70 5.85 0 1 0 13.40 0a6.70 5.85 0 1 0 -13.40 0zM856.77 494.95a3.40 4.20 0 1 0 6.80 0a3.40 4.20 0 1 0 -6.80 0z"/><path d="M860.2 500.2v6.600M856.2 503.2h8" fill="none" stroke="#008000" stroke-width="2.400"/>
<path fill-rule="evenodd" fill="#ff8040" d="M487.29 87.10a8.25 7.90 0 1 0 16.50 0a8.25 7.90 0 1 0 -16.50 0zM490.99 87.10a4.55 5.25 0 1 0 9.10 0a4.55 5.25 0 1 0 -9.10 0z"/><ellipse cx="495.5" cy="87.1" rx="1.500" ry="1.100" fill="#ff8040"/>
<path fill-rule="evenodd" fill="#ff8040" d="M489.29 497.30a8.25 7.90 0 1 0 16.50 0a8.25 7.90 0 1 0 -16.50 0zM492.99 497.30a4.55 5.25 0 1 0 9.10 0a4.55 5.25 0 1 0 -9.10 0z"/><ellipse cx="497.5" cy="497.3" rx="1.500" ry="1.100" fill="#ff8040"/>
<g stroke="#ff0000" fill="none"><circle cx="818.0" cy="89.0" r="6.050" stroke-width="2.500"/><path d="M822.3 84.5l4.700 -4.500" stroke-width="2.300"/></g><path d="M822.0 79.2h7v5.700z" fill="#ff0000"/>
<g stroke="#ff0000" fill="none"><circle cx="820.0" cy="499.2" r="6.050" stroke-width="2.500"/><path d="M824.3 494.7l4.700 -4.500" stroke-width="2.300"/></g><path d="M824.0 489.4h7v5.700z" fill="#ff0000"/>
<rect x="100" y="76" width="2" height="445" fill="#000"/>
<rect x="1096" y="76" width="1" height="445" fill="#000"/>
<rect x="83" y="520" width="1014" height="1" fill="#000"/>
<rect x="83" y="396" width="18" height="1" fill="#000"/>
<rect x="83" y="273" width="18" height="1" fill="#000"/>
<rect x="83" y="149" width="18" height="1" fill="#000"/>
<rect x="91" y="111" width="10" height="1" fill="#000"/>
<rect x="1097" y="111" width="11" height="1" fill="#000"/>
<rect x="91" y="177" width="10" height="1" fill="#000"/>
<rect x="1097" y="177" width="11" height="1" fill="#000"/>
<rect x="91" y="266" width="10" height="1" fill="#000"/>
<rect x="1097" y="266" width="11" height="1" fill="#000"/>
<rect x="91" y="346" width="10" height="1" fill="#000"/>
<rect x="1097" y="346" width="11" height="1" fill="#000"/>
<rect x="91" y="374" width="10" height="1" fill="#000"/>
<rect x="1097" y="374" width="11" height="1" fill="#000"/>
<rect x="91" y="461" width="10" height="1" fill="#000"/>
<rect x="1097" y="461" width="11" height="1" fill="#000"/>
<rect x="91" y="515" width="10" height="1" fill="#000"/>
<rect x="1097" y="515" width="11" height="1" fill="#000"/>
<rect x="91" y="485" width="10" height="1" fill="#000"/>
<path d="M92.5 297.5 L101 306 M92.5 322.5 L101 313.5 M1097.5 306 L1107 297.5 M1097.5 313.5 L1107 321.5" stroke="#000" fill="none"/>
<rect x="140" y="521" width="1" height="11" fill="#f00"/>
<text transform="translate(143.2,549.5) rotate(-56)" class="mo" text-anchor="middle">Apr</text>
<rect x="200" y="521" width="1" height="11" fill="#f00"/>
<text transform="translate(203.2,549.5) rotate(-56)" class="mo" text-anchor="middle">May</text>
<rect x="262" y="521" width="1" height="11" fill="#f00"/>
<text transform="translate(264.5,549.5) rotate(-56)" class="mo" text-anchor="middle">Jun</text>
<rect x="323" y="521" width="1" height="11" fill="#f00"/>
<text transform="translate(325.5,549.5) rotate(-56)" class="mo" text-anchor="middle">Jul</text>
<rect x="384" y="521" width="1" height="11" fill="#f00"/>
<text transform="translate(387.0,549.5) rotate(-56)" class="mo" text-anchor="middle">Aug</text>
<rect x="445" y="521" width="1" height="11" fill="#f00"/>
<text transform="translate(448.2,549.5) rotate(-56)" class="mo" text-anchor="middle">Sep</text>
<rect x="505" y="521" width="1" height="11" fill="#f00"/>
<text transform="translate(508.0,549.5) rotate(-56)" class="mo" text-anchor="middle">Oct</text>
<rect x="568" y="521" width="1" height="11" fill="#f00"/>
<text transform="translate(570.5,549.5) rotate(-56)" class="mo" text-anchor="middle">Nov</text>
<rect x="627" y="521" width="1" height="11" fill="#f00"/>
<text transform="translate(630.0,549.5) rotate(-56)" class="mo" text-anchor="middle">Dec</text>
<rect x="689" y="521" width="1" height="11" fill="#f00"/>
<text transform="translate(692.0,549.5) rotate(-56)" class="mo" text-anchor="middle">2013</text>
<rect x="751" y="521" width="1" height="11" fill="#f00"/>
<text transform="translate(754.2,549.5) rotate(-56)" class="mo" text-anchor="middle">Feb</text>
<rect x="807" y="521" width="1" height="11" fill="#f00"/>
<text transform="translate(809.5,549.5) rotate(-56)" class="mo" text-anchor="middle">Mar</text>
<rect x="868" y="521" width="1" height="11" fill="#f00"/>
<text transform="translate(871.2,549.5) rotate(-56)" class="mo" text-anchor="middle">Apr</text>
<rect x="928" y="521" width="1" height="11" fill="#f00"/>
<text transform="translate(930.8,549.5) rotate(-56)" class="mo" text-anchor="middle">May</text>
<rect x="990" y="521" width="1" height="11" fill="#f00"/>
<text transform="translate(993.2,549.5) rotate(-56)" class="mo" text-anchor="middle">Jun</text>
<rect x="1050" y="521" width="1" height="11" fill="#f00"/>
<text transform="translate(1053.2,549.5) rotate(-56)" class="mo" text-anchor="middle">Jul</text>
<g shape-rendering="crispEdges">
<path d="M97.8 111l3.200 -3.200l3.200 3.200l-3.200 3.200z" fill="#f00"/><path d="M98.8 111l2.200 -2.200l2.200 2.200l-2.200 2.200z" fill="#ff0"/>
<path d="M97.8 177l3.200 -3.200l3.200 3.200l-3.200 3.200z" fill="#f00"/><path d="M98.8 177l2.200 -2.200l2.200 2.200l-2.200 2.200z" fill="#ff0"/>
<path d="M97.8 266l3.200 -3.200l3.200 3.200l-3.200 3.200z" fill="#f00"/><path d="M98.8 266l2.200 -2.200l2.200 2.200l-2.200 2.200z" fill="#ff0"/>
<path d="M97.8 306l3.200 -3.200l3.200 3.200l-3.200 3.200z" fill="#f00"/><path d="M98.8 306l2.200 -2.200l2.200 2.200l-2.200 2.200z" fill="#ff0"/>
<path d="M97.8 313l3.200 -3.200l3.200 3.200l-3.200 3.200z" fill="#f00"/><path d="M98.8 313l2.200 -2.200l2.200 2.200l-2.200 2.200z" fill="#ff0"/>
<path d="M97.8 346l3.200 -3.200l3.200 3.200l-3.200 3.200z" fill="#f00"/><path d="M98.8 346l2.200 -2.200l2.200 2.200l-2.200 2.200z" fill="#ff0"/>
<path d="M97.8 374l3.200 -3.200l3.200 3.200l-3.200 3.200z" fill="#f00"/><path d="M98.8 374l2.200 -2.200l2.200 2.200l-2.200 2.200z" fill="#ff0"/>
<path d="M97.8 461l3.200 -3.200l3.200 3.200l-3.200 3.200z" fill="#f00"/><path d="M98.8 461l2.200 -2.200l2.200 2.200l-2.200 2.200z" fill="#ff0"/>
<path d="M97.8 515l3.200 -3.200l3.200 3.200l-3.200 3.200z" fill="#f00"/><path d="M98.8 515l2.200 -2.200l2.200 2.200l-2.200 2.200z" fill="#ff0"/>
<path d="M211.8 111l3.200 -3.200l3.200 3.200l-3.200 3.200z" fill="#f00"/><path d="M212.8 111l2.200 -2.200l2.200 2.200l-2.200 2.200z" fill="#ff0"/>
<path d="M386.8 111l3.200 -3.200l3.200 3.200l-3.200 3.200z" fill="#f00"/><path d="M387.8 111l2.200 -2.200l2.200 2.200l-2.200 2.200z" fill="#ff0"/>
<path d="M562.8 111l3.200 -3.200l3.200 3.200l-3.200 3.200z" fill="#f00"/><path d="M563.8 111l2.200 -2.200l2.200 2.200l-2.200 2.200z" fill="#ff0"/>
<path d="M737.8 111l3.200 -3.200l3.200 3.200l-3.200 3.200z" fill="#f00"/><path d="M738.8 111l2.200 -2.200l2.200 2.200l-2.200 2.200z" fill="#ff0"/>
<path d="M913.8 111l3.200 -3.200l3.200 3.200l-3.200 3.200z" fill="#f00"/><path d="M914.8 111l2.200 -2.200l2.200 2.200l-2.200 2.200z" fill="#ff0"/>
<path d="M1089.8 111l3.200 -3.200l3.200 3.200l-3.200 3.200z" fill="#f00"/><path d="M1090.8 111l2.200 -2.200l2.200 2.200l-2.200 2.200z" fill="#ff0"/>
<path d="M178.8 177l3.200 -3.200l3.200 3.200l-3.200 3.200z" fill="#f00"/><path d="M179.8 177l2.200 -2.200l2.200 2.200l-2.200 2.200z" fill="#ff0"/>
<path d="M354.8 177l3.200 -3.200l3.200 3.200l-3.200 3.200z" fill="#f00"/><path d="M355.8 177l2.200 -2.200l2.200 2.200l-2.200 2.200z" fill="#ff0"/>
<path d="M529.8 177l3.200 -3.200l3.200 3.200l-3.200 3.200z" fill="#f00"/><path d="M530.8 177l2.200 -2.200l2.200 2.200l-2.200 2.200z" fill="#ff0"/>
<path d="M705.8 177l3.200 -3.200l3.200 3.200l-3.200 3.200z" fill="#f00"/><path d="M706.8 177l2.200 -2.200l2.200 2.200l-2.200 2.200z" fill="#ff0"/>
<path d="M880.8 177l3.200 -3.200l3.200 3.200l-3.200 3.200z" fill="#f00"/><path d="M881.8 177l2.200 -2.200l2.200 2.200l-2.200 2.200z" fill="#ff0"/>
<path d="M1056.8 177l3.200 -3.200l3.200 3.200l-3.200 3.200z" fill="#f00"/><path d="M1057.8 177l2.200 -2.200l2.200 2.200l-2.200 2.200z" fill="#ff0"/>
<path d="M128.8 266l3.200 -3.200l3.200 3.200l-3.200 3.200z" fill="#f00"/><path d="M129.8 266l2.200 -2.200l2.200 2.200l-2.200 2.200z" fill="#ff0"/>
<path d="M304.8 266l3.200 -3.200l3.200 3.200l-3.200 3.200z" fill="#f00"/><path d="M305.8 266l2.200 -2.200l2.200 2.200l-2.200 2.200z" fill="#ff0"/>
<path d="M479.8 266l3.200 -3.200l3.200 3.200l-3.200 3.200z" fill="#f00"/><path d="M480.8 266l2.200 -2.200l2.200 2.200l-2.200 2.200z" fill="#ff0"/>
<path d="M655.8 266l3.200 -3.200l3.200 3.200l-3.200 3.200z" fill="#f00"/><path d="M656.8 266l2.200 -2.200l2.200 2.200l-2.200 2.200z" fill="#ff0"/>
<path d="M831.8 266l3.200 -3.200l3.200 3.200l-3.200 3.200z" fill="#f00"/><path d="M832.8 266l2.200 -2.200l2.200 2.200l-2.200 2.200z" fill="#ff0"/>
<path d="M1006.8 266l3.200 -3.200l3.200 3.200l-3.200 3.200z" fill="#f00"/><path d="M1007.8 266l2.200 -2.200l2.200 2.200l-2.200 2.200z" fill="#ff0"/>
<path d="M111.8 306l3.200 -3.200l3.200 3.200l-3.200 3.200z" fill="#f00"/><path d="M112.8 306l2.200 -2.200l2.200 2.200l-2.200 2.200z" fill="#ff0"/>
<path d="M287.8 306l3.200 -3.200l3.200 3.200l-3.200 3.200z" fill="#f00"/><path d="M288.8 306l2.200 -2.200l2.200 2.200l-2.200 2.200z" fill="#ff0"/>
<path d="M462.8 306l3.200 -3.200l3.200 3.200l-3.200 3.200z" fill="#f00"/><path d="M463.8 306l2.200 -2.200l2.200 2.200l-2.200 2.200z" fill="#ff0"/>
<path d="M638.8 306l3.200 -3.200l3.200 3.200l-3.200 3.200z" fill="#f00"/><path d="M639.8 306l2.200 -2.200l2.200 2.200l-2.200 2.200z" fill="#ff0"/>
<path d="M813.8 306l3.200 -3.200l3.200 3.200l-3.200 3.200z" fill="#f00"/><path d="M814.8 306l2.200 -2.200l2.200 2.200l-2.200 2.200z" fill="#ff0"/>
<path d="M989.8 306l3.200 -3.200l3.200 3.200l-3.200 3.200z" fill="#f00"/><path d="M990.8 306l2.200 -2.200l2.200 2.200l-2.200 2.200z" fill="#ff0"/>
<path d="M108.8 313l3.200 -3.200l3.200 3.200l-3.200 3.200z" fill="#f00"/><path d="M109.8 313l2.200 -2.200l2.200 2.200l-2.200 2.200z" fill="#ff0"/>
<path d="M284.8 313l3.200 -3.200l3.200 3.200l-3.200 3.200z" fill="#f00"/><path d="M285.8 313l2.200 -2.200l2.200 2.200l-2.200 2.200z" fill="#ff0"/>
<path d="M459.8 313l3.200 -3.200l3.200 3.200l-3.200 3.200z" fill="#f00"/><path d="M460.8 313l2.200 -2.200l2.200 2.200l-2.200 2.200z" fill="#ff0"/>
<path d="M635.8 313l3.200 -3.200l3.200 3.200l-3.200 3.200z" fill="#f00"/><path d="M636.8 313l2.200 -2.200l2.200 2.200l-2.200 2.200z" fill="#ff0"/>
<path d="M811.8 313l3.200 -3.200l3.200 3.200l-3.200 3.200z" fill="#f00"/><path d="M812.8 313l2.200 -2.200l2.200 2.200l-2.200 2.200z" fill="#ff0"/>
<path d="M986.8 313l3.200 -3.200l3.200 3.200l-3.200 3.200z" fill="#f00"/><path d="M987.8 313l2.200 -2.200l2.200 2.200l-2.200 2.200z" fill="#ff0"/>
<path d="M273.8 346l3.200 -3.200l3.200 3.200l-3.200 3.200z" fill="#f00"/><path d="M274.8 346l2.200 -2.200l2.200 2.200l-2.200 2.200z" fill="#ff0"/>
<path d="M448.8 346l3.200 -3.200l3.200 3.200l-3.200 3.200z" fill="#f00"/><path d="M449.8 346l2.200 -2.200l2.200 2.200l-2.200 2.200z" fill="#ff0"/>
<path d="M624.8 346l3.200 -3.200l3.200 3.200l-3.200 3.200z" fill="#f00"/><path d="M625.8 346l2.200 -2.200l2.200 2.200l-2.200 2.200z" fill="#ff0"/>
<path d="M799.8 346l3.200 -3.200l3.200 3.200l-3.200 3.200z" fill="#f00"/><path d="M800.8 346l2.200 -2.200l2.200 2.200l-2.200 2.200z" fill="#ff0"/>
<path d="M975.8 346l3.200 -3.200l3.200 3.200l-3.200 3.200z" fill="#f00"/><path d="M976.8 346l2.200 -2.200l2.200 2.200l-2.200 2.200z" fill="#ff0"/>
<path d="M268.8 362l3.200 -3.200l3.200 3.200l-3.200 3.200z" fill="#f00"/><path d="M269.8 362l2.200 -2.200l2.200 2.200l-2.200 2.200z" fill="#ff0"/>
<path d="M443.8 362l3.200 -3.200l3.200 3.200l-3.200 3.200z" fill="#f00"/><path d="M444.8 362l2.200 -2.200l2.200 2.200l-2.200 2.200z" fill="#ff0"/>
<path d="M619.8 362l3.200 -3.200l3.200 3.200l-3.200 3.200z" fill="#f00"/><path d="M620.8 362l2.200 -2.200l2.200 2.200l-2.200 2.200z" fill="#ff0"/>
<path d="M795.8 362l3.200 -3.200l3.200 3.200l-3.200 3.200z" fill="#f00"/><path d="M796.8 362l2.200 -2.200l2.200 2.200l-2.200 2.200z" fill="#ff0"/>
<path d="M970.8 362l3.200 -3.200l3.200 3.200l-3.200 3.200z" fill="#f00"/><path d="M971.8 362l2.200 -2.200l2.200 2.200l-2.200 2.200z" fill="#ff0"/>
<path d="M264.8 374l3.200 -3.200l3.200 3.200l-3.200 3.200z" fill="#f00"/><path d="M265.8 374l2.200 -2.200l2.200 2.200l-2.200 2.200z" fill="#ff0"/>
<path d="M440.8 374l3.200 -3.200l3.200 3.200l-3.200 3.200z" fill="#f00"/><path d="M441.8 374l2.200 -2.200l2.200 2.200l-2.200 2.200z" fill="#ff0"/>
<path d="M615.8 374l3.200 -3.200l3.200 3.200l-3.200 3.200z" fill="#f00"/><path d="M616.8 374l2.200 -2.200l2.200 2.200l-2.200 2.200z" fill="#ff0"/>
<path d="M791.8 374l3.200 -3.200l3.200 3.200l-3.200 3.200z" fill="#f00"/><path d="M792.8 374l2.200 -2.200l2.200 2.200l-2.200 2.200z" fill="#ff0"/>
<path d="M967.8 374l3.200 -3.200l3.200 3.200l-3.200 3.200z" fill="#f00"/><path d="M968.8 374l2.200 -2.200l2.200 2.200l-2.200 2.200z" fill="#ff0"/>
<path d="M242.8 461l3.200 -3.200l3.200 3.200l-3.200 3.200z" fill="#f00"/><path d="M243.8 461l2.200 -2.200l2.200 2.200l-2.200 2.200z" fill="#ff0"/>
<path d="M417.8 461l3.200 -3.200l3.200 3.200l-3.200 3.200z" fill="#f00"/><path d="M418.8 461l2.200 -2.200l2.200 2.200l-2.200 2.200z" fill="#ff0"/>
<path d="M593.8 461l3.200 -3.200l3.200 3.200l-3.200 3.200z" fill="#f00"/><path d="M594.8 461l2.200 -2.200l2.200 2.200l-2.200 2.200z" fill="#ff0"/>
<path d="M769.8 461l3.200 -3.200l3.200 3.200l-3.200 3.200z" fill="#f00"/><path d="M770.8 461l2.200 -2.200l2.200 2.200l-2.200 2.200z" fill="#ff0"/>
<path d="M944.8 461l3.200 -3.200l3.200 3.200l-3.200 3.200z" fill="#f00"/><path d="M945.8 461l2.200 -2.200l2.200 2.200l-2.200 2.200z" fill="#ff0"/>
<path d="M226.8 515l3.200 -3.200l3.200 3.200l-3.200 3.200z" fill="#f00"/><path d="M227.8 515l2.200 -2.200l2.200 2.200l-2.200 2.200z" fill="#ff0"/>
<path d="M402.8 515l3.200 -3.200l3.200 3.200l-3.200 3.200z" fill="#f00"/><path d="M403.8 515l2.200 -2.200l2.200 2.200l-2.200 2.200z" fill="#ff0"/>
<path d="M577.8 515l3.200 -3.200l3.200 3.200l-3.200 3.200z" fill="#f00"/><path d="M578.8 515l2.200 -2.200l2.200 2.200l-2.200 2.200z" fill="#ff0"/>
<path d="M753.8 515l3.200 -3.200l3.200 3.200l-3.200 3.200z" fill="#f00"/><path d="M754.8 515l2.200 -2.200l2.200 2.200l-2.200 2.200z" fill="#ff0"/>
<path d="M928.8 515l3.200 -3.200l3.200 3.200l-3.200 3.200z" fill="#f00"/><path d="M929.8 515l2.200 -2.200l2.200 2.200l-2.200 2.200z" fill="#ff0"/>
<path d="M362.8 111l3.200 -3.200l3.200 3.200l-3.200 3.200z" fill="#f00"/><path d="M363.8 111l2.200 -2.200l2.200 2.200l-2.200 2.200z" fill="#ff0"/>
<path d="M810.8 111l3.200 -3.200l3.200 3.200l-3.200 3.200z" fill="#f00"/><path d="M811.8 111l2.200 -2.200l2.200 2.200l-2.200 2.200z" fill="#ff0"/>
<path d="M295.8 177l3.200 -3.200l3.200 3.200l-3.200 3.200z" fill="#f00"/><path d="M296.8 177l2.200 -2.200l2.200 2.200l-2.200 2.200z" fill="#ff0"/>
<path d="M743.8 177l3.200 -3.200l3.200 3.200l-3.200 3.200z" fill="#f00"/><path d="M744.8 177l2.200 -2.200l2.200 2.200l-2.200 2.200z" fill="#ff0"/>
<path d="M205.8 266l3.200 -3.200l3.200 3.200l-3.200 3.200z" fill="#f00"/><path d="M206.8 266l2.200 -2.200l2.200 2.200l-2.200 2.200z" fill="#ff0"/>
<path d="M653.8 266l3.200 -3.200l3.200 3.200l-3.200 3.200z" fill="#f00"/><path d="M654.8 266l2.200 -2.200l2.200 2.200l-2.200 2.200z" fill="#ff0"/>
<path d="M165.8 306l3.200 -3.200l3.200 3.200l-3.200 3.200z" fill="#f00"/><path d="M166.8 306l2.200 -2.200l2.200 2.200l-2.200 2.200z" fill="#ff0"/>
<path d="M613.8 306l3.200 -3.200l3.200 3.200l-3.200 3.200z" fill="#f00"/><path d="M614.8 306l2.200 -2.200l2.200 2.200l-2.200 2.200z" fill="#ff0"/>
<path d="M1061.8 306l3.200 -3.200l3.200 3.200l-3.200 3.200z" fill="#f00"/><path d="M1062.8 306l2.200 -2.200l2.200 2.200l-2.200 2.200z" fill="#ff0"/>
<path d="M158.8 313l3.200 -3.200l3.200 3.200l-3.200 3.200z" fill="#f00"/><path d="M159.8 313l2.200 -2.200l2.200 2.200l-2.200 2.200z" fill="#ff0"/>
<path d="M606.8 313l3.200 -3.200l3.200 3.200l-3.200 3.200z" fill="#f00"/><path d="M607.8 313l2.200 -2.200l2.200 2.200l-2.200 2.200z" fill="#ff0"/>
<path d="M1054.8 313l3.200 -3.200l3.200 3.200l-3.200 3.200z" fill="#f00"/><path d="M1055.8 313l2.200 -2.200l2.200 2.200l-2.200 2.200z" fill="#ff0"/>
<path d="M125.8 346l3.200 -3.200l3.200 3.200l-3.200 3.200z" fill="#f00"/><path d="M126.8 346l2.200 -2.200l2.200 2.200l-2.200 2.200z" fill="#ff0"/>
<path d="M573.8 346l3.200 -3.200l3.200 3.200l-3.200 3.200z" fill="#f00"/><path d="M574.8 346l2.200 -2.200l2.200 2.200l-2.200 2.200z" fill="#ff0"/>
<path d="M1022.8 346l3.200 -3.200l3.200 3.200l-3.200 3.200z" fill="#f00"/><path d="M1023.8 346l2.200 -2.200l2.200 2.200l-2.200 2.200z" fill="#ff0"/>
<path d="M109.8 362l3.200 -3.200l3.200 3.200l-3.200 3.200z" fill="#f00"/><path d="M110.8 362l2.200 -2.200l2.200 2.200l-2.200 2.200z" fill="#ff0"/>
<path d="M557.8 362l3.200 -3.200l3.200 3.200l-3.200 3.200z" fill="#f00"/><path d="M558.8 362l2.200 -2.200l2.200 2.200l-2.200 2.200z" fill="#ff0"/>
<path d="M1006.8 362l3.200 -3.200l3.200 3.200l-3.200 3.200z" fill="#f00"/><path d="M1007.8 362l2.200 -2.200l2.200 2.200l-2.200 2.200z" fill="#ff0"/>
<path d="M545.8 374l3.200 -3.200l3.200 3.200l-3.200 3.200z" fill="#f00"/><path d="M546.8 374l2.200 -2.200l2.200 2.200l-2.200 2.200z" fill="#ff0"/>
<path d="M993.8 374l3.200 -3.200l3.200 3.200l-3.200 3.200z" fill="#f00"/><path d="M994.8 374l2.200 -2.200l2.200 2.200l-2.200 2.200z" fill="#ff0"/>
<path d="M458.8 461l3.200 -3.200l3.200 3.200l-3.200 3.200z" fill="#f00"/><path d="M459.8 461l2.200 -2.200l2.200 2.200l-2.200 2.200z" fill="#ff0"/>
<path d="M907.8 461l3.200 -3.200l3.200 3.200l-3.200 3.200z" fill="#f00"/><path d="M908.8 461l2.200 -2.200l2.200 2.200l-2.200 2.200z" fill="#ff0"/>
<path d="M404.8 515l3.200 -3.200l3.200 3.200l-3.200 3.200z" fill="#f00"/><path d="M405.8 515l2.200 -2.200l2.200 2.200l-2.200 2.200z" fill="#ff0"/>
<path d="M852.8 515l3.200 -3.200l3.200 3.200l-3.200 3.200z" fill="#f00"/><path d="M853.8 515l2.200 -2.200l2.200 2.200l-2.200 2.200z" fill="#ff0"/>
<path d="M424.8 111l3.200 -3.200l3.200 3.200l-3.200 3.200z" fill="#f00"/><path d="M425.8 111l2.200 -2.200l2.200 2.200l-2.200 2.200z" fill="#ff0"/>
<path d="M313.8 177l3.200 -3.200l3.200 3.200l-3.200 3.200z" fill="#f00"/><path d="M314.8 177l2.200 -2.200l2.200 2.200l-2.200 2.200z" fill="#ff0"/>
<path d="M1041.8 177l3.200 -3.200l3.200 3.200l-3.200 3.200z" fill="#f00"/><path d="M1042.8 177l2.200 -2.200l2.200 2.200l-2.200 2.200z" fill="#ff0"/>
<path d="M163.8 266l3.200 -3.200l3.200 3.200l-3.200 3.200z" fill="#f00"/><path d="M164.8 266l2.200 -2.200l2.200 2.200l-2.200 2.200z" fill="#ff0"/>
<path d="M892.8 266l3.200 -3.200l3.200 3.200l-3.200 3.200z" fill="#f00"/><path d="M893.8 266l2.200 -2.200l2.200 2.200l-2.200 2.200z" fill="#ff0"/>
<path d="M98.8 306l3.200 -3.200l3.200 3.200l-3.200 3.200z" fill="#f00"/><path d="M99.8 306l2.200 -2.200l2.200 2.200l-2.200 2.200z" fill="#ff0"/>
<path d="M827.8 306l3.200 -3.200l3.200 3.200l-3.200 3.200z" fill="#f00"/><path d="M828.8 306l2.200 -2.200l2.200 2.200l-2.200 2.200z" fill="#ff0"/>
<path d="M816.8 313l3.200 -3.200l3.200 3.200l-3.200 3.200z" fill="#f00"/><path d="M817.8 313l2.200 -2.200l2.200 2.200l-2.200 2.200z" fill="#ff0"/>
<path d="M763.8 346l3.200 -3.200l3.200 3.200l-3.200 3.200z" fill="#f00"/><path d="M764.8 346l2.200 -2.200l2.200 2.200l-2.200 2.200z" fill="#ff0"/>
<path d="M737.8 362l3.200 -3.200l3.200 3.200l-3.200 3.200z" fill="#f00"/><path d="M738.8 362l2.200 -2.200l2.200 2.200l-2.200 2.200z" fill="#ff0"/>
<path d="M717.8 374l3.200 -3.200l3.200 3.200l-3.200 3.200z" fill="#f00"/><path d="M718.8 374l2.200 -2.200l2.200 2.200l-2.200 2.200z" fill="#ff0"/>
<path d="M580.8 461l3.200 -3.200l3.200 3.200l-3.200 3.200z" fill="#f00"/><path d="M581.8 461l2.200 -2.200l2.200 2.200l-2.200 2.200z" fill="#ff0"/>
<path d="M492.8 515l3.200 -3.200l3.200 3.200l-3.200 3.200z" fill="#f00"/><path d="M493.8 515l2.200 -2.200l2.200 2.200l-2.200 2.200z" fill="#ff0"/>
<path d="M713.8 111l3.200 -3.200l3.200 3.200l-3.200 3.200z" fill="#f00"/><path d="M714.8 111l2.200 -2.200l2.200 2.200l-2.200 2.200z" fill="#ff0"/>
<path d="M540.8 177l3.200 -3.200l3.200 3.200l-3.200 3.200z" fill="#f00"/><path d="M541.8 177l2.200 -2.200l2.200 2.200l-2.200 2.200z" fill="#ff0"/>
<path d="M265.8 266l3.200 -3.200l3.200 3.200l-3.200 3.200z" fill="#f00"/><path d="M266.8 266l2.200 -2.200l2.200 2.200l-2.200 2.200z" fill="#ff0"/>
<path d="M123.8 306l3.200 -3.200l3.200 3.200l-3.200 3.200z" fill="#f00"/><path d="M124.8 306l2.200 -2.200l2.200 2.200l-2.200 2.200z" fill="#ff0"/>
<path d="M965.8 461l3.200 -3.200l3.200 3.200l-3.200 3.200z" fill="#f00"/><path d="M966.8 461l2.200 -2.200l2.200 2.200l-2.200 2.200z" fill="#ff0"/>
<path d="M819.8 515l3.200 -3.200l3.200 3.200l-3.200 3.200z" fill="#f00"/><path d="M820.8 515l2.200 -2.200l2.200 2.200l-2.200 2.200z" fill="#ff0"/>
<path d="M442.8 461l3.200 -3.200l3.200 3.200l-3.200 3.200z" fill="#f00"/><path d="M443.8 461l2.200 -2.200l2.200 2.200l-2.200 2.200z" fill="#ff0"/>
<path d="M128.8 266l3.200 -3.200l3.200 3.200l-3.200 3.200z" fill="#f00"/><path d="M129.8 266l2.200 -2.200l2.200 2.200l-2.200 2.200z" fill="#00f"/>
<path d="M305.8 263l3.200 -3.200l3.200 3.200l-3.200 3.200z" fill="#f00"/><path d="M306.8 263l2.200 -2.200l2.200 2.200l-2.200 2.200z" fill="#00f"/>
<path d="M483.8 259l3.200 -3.200l3.200 3.200l-3.200 3.200z" fill="#f00"/><path d="M484.8 259l2.200 -2.200l2.200 2.200l-2.200 2.200z" fill="#00f"/>
<path d="M660.8 256l3.200 -3.200l3.200 3.200l-3.200 3.200z" fill="#f00"/><path d="M661.8 256l2.200 -2.200l2.200 2.200l-2.200 2.200z" fill="#00f"/>
<path d="M837.8 252l3.200 -3.200l3.200 3.200l-3.200 3.200z" fill="#f00"/><path d="M838.8 252l2.200 -2.200l2.200 2.200l-2.200 2.200z" fill="#00f"/>
<path d="M1015.8 249l3.200 -3.200l3.200 3.200l-3.200 3.200z" fill="#f00"/><path d="M1016.8 249l2.200 -2.200l2.200 2.200l-2.200 2.200z" fill="#00f"/>
<path d="M244.8 453l3.200 -3.200l3.200 3.200l-3.200 3.200z" fill="#f00"/><path d="M245.8 453l2.200 -2.200l2.200 2.200l-2.200 2.200z" fill="#00f"/>
<path d="M422.8 443l3.200 -3.200l3.200 3.200l-3.200 3.200z" fill="#f00"/><path d="M423.8 443l2.200 -2.200l2.200 2.200l-2.200 2.200z" fill="#00f"/>
<path d="M600.8 433l3.200 -3.200l3.200 3.200l-3.200 3.200z" fill="#f00"/><path d="M601.8 433l2.200 -2.200l2.200 2.200l-2.200 2.200z" fill="#00f"/>
<path d="M778.8 424l3.200 -3.200l3.200 3.200l-3.200 3.200z" fill="#f00"/><path d="M779.8 424l2.200 -2.200l2.200 2.200l-2.200 2.200z" fill="#00f"/>
<path d="M956.8 415l3.200 -3.200l3.200 3.200l-3.200 3.200z" fill="#f00"/><path d="M957.8 415l2.200 -2.200l2.200 2.200l-2.200 2.200z" fill="#00f"/>
<path d="M238.8 475l3.200 -3.200l3.200 3.200l-3.200 3.200z" fill="#f00"/><path d="M239.8 475l2.200 -2.200l2.200 2.200l-2.200 2.200z" fill="#00f"/>
<path d="M417.8 463l3.200 -3.200l3.200 3.200l-3.200 3.200z" fill="#f00"/><path d="M418.8 463l2.200 -2.200l2.200 2.200l-2.200 2.200z" fill="#00f"/>
<path d="M596.8 450l3.200 -3.200l3.200 3.200l-3.200 3.200z" fill="#f00"/><path d="M597.8 450l2.200 -2.200l2.200 2.200l-2.200 2.200z" fill="#00f"/>
<path d="M775.8 436l3.200 -3.200l3.200 3.200l-3.200 3.200z" fill="#f00"/><path d="M776.8 436l2.200 -2.200l2.200 2.200l-2.200 2.200z" fill="#00f"/>
<path d="M954.8 421l3.200 -3.200l3.200 3.200l-3.200 3.200z" fill="#f00"/><path d="M955.8 421l2.200 -2.200l2.200 2.200l-2.200 2.200z" fill="#00f"/>
<path d="M226.8 515l3.200 -3.200l3.200 3.200l-3.200 3.200z" fill="#f00"/><path d="M227.8 515l2.200 -2.200l2.200 2.200l-2.200 2.200z" fill="#00f"/>
<path d="M402.8 514l3.200 -3.200l3.200 3.200l-3.200 3.200z" fill="#f00"/><path d="M403.8 514l2.200 -2.200l2.200 2.200l-2.200 2.200z" fill="#00f"/>
<path d="M578.8 512l3.200 -3.200l3.200 3.200l-3.200 3.200z" fill="#f00"/><path d="M579.8 512l2.200 -2.200l2.200 2.200l-2.200 2.200z" fill="#00f"/>
<path d="M754.8 511l3.200 -3.200l3.200 3.200l-3.200 3.200z" fill="#f00"/><path d="M755.8 511l2.200 -2.200l2.200 2.200l-2.200 2.200z" fill="#00f"/>
<path d="M930.8 510l3.200 -3.200l3.200 3.200l-3.200 3.200z" fill="#f00"/><path d="M931.8 510l2.200 -2.200l2.200 2.200l-2.200 2.200z" fill="#00f"/>
<path d="M211.8 111l3.200 -3.200l3.200 3.200l-3.200 3.200z" fill="#f00"/><path d="M212.8 111l2.200 -2.200l2.200 2.200l-2.200 2.200z" fill="#00f"/>
<path d="M387.8 111l3.200 -3.200l3.200 3.200l-3.200 3.200z" fill="#f00"/><path d="M388.8 111l2.200 -2.200l2.200 2.200l-2.200 2.200z" fill="#00f"/>
<path d="M562.8 110l3.200 -3.200l3.200 3.200l-3.200 3.200z" fill="#f00"/><path d="M563.8 110l2.200 -2.200l2.200 2.200l-2.200 2.200z" fill="#00f"/>
<path d="M738.8 109l3.200 -3.200l3.200 3.200l-3.200 3.200z" fill="#f00"/><path d="M739.8 109l2.200 -2.200l2.200 2.200l-2.200 2.200z" fill="#00f"/>
<path d="M914.8 109l3.200 -3.200l3.200 3.200l-3.200 3.200z" fill="#f00"/><path d="M915.8 109l2.200 -2.200l2.200 2.200l-2.200 2.200z" fill="#00f"/>
<path d="M1090.8 108l3.200 -3.200l3.200 3.200l-3.200 3.200z" fill="#f00"/><path d="M1091.8 108l2.200 -2.200l2.200 2.200l-2.200 2.200z" fill="#00f"/>
<path d="M178.8 177l3.200 -3.200l3.200 3.200l-3.200 3.200z" fill="#f00"/><path d="M179.8 177l2.200 -2.200l2.200 2.200l-2.200 2.200z" fill="#00f"/>
<path d="M354.8 177l3.200 -3.200l3.200 3.200l-3.200 3.200z" fill="#f00"/><path d="M355.8 177l2.200 -2.200l2.200 2.200l-2.200 2.200z" fill="#00f"/>
<path d="M530.8 176l3.200 -3.200l3.200 3.200l-3.200 3.200z" fill="#f00"/><path d="M531.8 176l2.200 -2.200l2.200 2.200l-2.200 2.200z" fill="#00f"/>
<path d="M705.8 176l3.200 -3.200l3.200 3.200l-3.200 3.200z" fill="#f00"/><path d="M706.8 176l2.200 -2.200l2.200 2.200l-2.200 2.200z" fill="#00f"/>
<path d="M881.8 175l3.200 -3.200l3.200 3.200l-3.200 3.200z" fill="#f00"/><path d="M882.8 175l2.200 -2.200l2.200 2.200l-2.200 2.200z" fill="#00f"/>
<path d="M1057.8 174l3.200 -3.200l3.200 3.200l-3.200 3.200z" fill="#f00"/><path d="M1058.8 174l2.200 -2.200l2.200 2.200l-2.200 2.200z" fill="#00f"/>
<path d="M206.8 265l3.200 -3.200l3.200 3.200l-3.200 3.200z" fill="#f00"/><path d="M207.8 265l2.200 -2.200l2.200 2.200l-2.200 2.200z" fill="#00f"/>
<path d="M663.8 256l3.200 -3.200l3.200 3.200l-3.200 3.200z" fill="#f00"/><path d="M664.8 256l2.200 -2.200l2.200 2.200l-2.200 2.200z" fill="#00f"/>
<path d="M480.8 440l3.200 -3.200l3.200 3.200l-3.200 3.200z" fill="#f00"/><path d="M481.8 440l2.200 -2.200l2.200 2.200l-2.200 2.200z" fill="#00f"/>
<path d="M953.8 415l3.200 -3.200l3.200 3.200l-3.200 3.200z" fill="#f00"/><path d="M954.8 415l2.200 -2.200l2.200 2.200l-2.200 2.200z" fill="#00f"/>
<path d="M460.8 460l3.200 -3.200l3.200 3.200l-3.200 3.200z" fill="#f00"/><path d="M461.8 460l2.200 -2.200l2.200 2.200l-2.200 2.200z" fill="#00f"/>
<path d="M946.8 422l3.200 -3.200l3.200 3.200l-3.200 3.200z" fill="#f00"/><path d="M947.8 422l2.200 -2.200l2.200 2.200l-2.200 2.200z" fill="#00f"/>
<path d="M405.8 514l3.200 -3.200l3.200 3.200l-3.200 3.200z" fill="#f00"/><path d="M406.8 514l2.200 -2.200l2.200 2.200l-2.200 2.200z" fill="#00f"/>
<path d="M857.8 511l3.200 -3.200l3.200 3.200l-3.200 3.200z" fill="#f00"/><path d="M858.8 511l2.200 -2.200l2.200 2.200l-2.200 2.200z" fill="#00f"/>
<path d="M362.8 111l3.200 -3.200l3.200 3.200l-3.200 3.200z" fill="#f00"/><path d="M363.8 111l2.200 -2.200l2.200 2.200l-2.200 2.200z" fill="#00f"/>
<path d="M812.8 109l3.200 -3.200l3.200 3.200l-3.200 3.200z" fill="#f00"/><path d="M813.8 109l2.200 -2.200l2.200 2.200l-2.200 2.200z" fill="#00f"/>
<path d="M295.8 177l3.200 -3.200l3.200 3.200l-3.200 3.200z" fill="#f00"/><path d="M296.8 177l2.200 -2.200l2.200 2.200l-2.200 2.200z" fill="#00f"/>
<path d="M745.8 175l3.200 -3.200l3.200 3.200l-3.200 3.200z" fill="#f00"/><path d="M746.8 175l2.200 -2.200l2.200 2.200l-2.200 2.200z" fill="#00f"/>
<path d="M164.8 266l3.200 -3.200l3.200 3.200l-3.200 3.200z" fill="#f00"/><path d="M165.8 266l2.200 -2.200l2.200 2.200l-2.200 2.200z" fill="#00f"/>
<path d="M918.8 251l3.200 -3.200l3.200 3.200l-3.200 3.200z" fill="#f00"/><path d="M919.8 251l2.200 -2.200l2.200 2.200l-2.200 2.200z" fill="#00f"/>
<path d="M628.8 431l3.200 -3.200l3.200 3.200l-3.200 3.200z" fill="#f00"/><path d="M629.8 431l2.200 -2.200l2.200 2.200l-2.200 2.200z" fill="#00f"/>
<path d="M598.8 450l3.200 -3.200l3.200 3.200l-3.200 3.200z" fill="#f00"/><path d="M599.8 450l2.200 -2.200l2.200 2.200l-2.200 2.200z" fill="#00f"/>
<path d="M496.8 513l3.200 -3.200l3.200 3.200l-3.200 3.200z" fill="#f00"/><path d="M497.8 513l2.200 -2.200l2.200 2.200l-2.200 2.200z" fill="#00f"/>
<path d="M425.8 110l3.200 -3.200l3.200 3.200l-3.200 3.200z" fill="#f00"/><path d="M426.8 110l2.200 -2.200l2.200 2.200l-2.200 2.200z" fill="#00f"/>
<path d="M313.8 177l3.200 -3.200l3.200 3.200l-3.200 3.200z" fill="#f00"/><path d="M314.8 177l2.200 -2.200l2.200 2.200l-2.200 2.200z" fill="#00f"/>
<path d="M1046.8 174l3.200 -3.200l3.200 3.200l-3.200 3.200z" fill="#f00"/><path d="M1047.8 174l2.200 -2.200l2.200 2.200l-2.200 2.200z" fill="#00f"/>
<path d="M274.8 263l3.200 -3.200l3.200 3.200l-3.200 3.200z" fill="#f00"/><path d="M275.8 263l2.200 -2.200l2.200 2.200l-2.200 2.200z" fill="#00f"/>
<path d="M830.8 511l3.200 -3.200l3.200 3.200l-3.200 3.200z" fill="#f00"/><path d="M831.8 511l2.200 -2.200l2.200 2.200l-2.200 2.200z" fill="#00f"/>
<path d="M718.8 109l3.200 -3.200l3.200 3.200l-3.200 3.200z" fill="#f00"/><path d="M719.8 109l2.200 -2.200l2.200 2.200l-2.200 2.200z" fill="#00f"/>
<path d="M543.8 176l3.200 -3.200l3.200 3.200l-3.200 3.200z" fill="#f00"/><path d="M544.8 176l2.200 -2.200l2.200 2.200l-2.200 2.200z" fill="#00f"/>
<path d="M401.8 518l3.200 -3.200l3.200 3.200l-3.200 3.200z" fill="#f00"/><path d="M402.8 518l2.200 -2.200l2.200 2.200l-2.200 2.200z" fill="#00f"/>
<path d="M657.8 262l3.200 -3.200l3.200 3.200l-3.200 3.200z" fill="#f00"/><path d="M658.8 262l2.200 -2.200l2.200 2.200l-2.200 2.200z" fill="#00f"/>
<path d="M957.8 411l3.200 -3.200l3.200 3.200l-3.200 3.200z" fill="#f00"/><path d="M958.8 411l2.200 -2.200l2.200 2.200l-2.200 2.200z" fill="#00f"/>
<path d="M115.8 295l3.200 -3.200l3.200 3.200l-3.200 3.200z" fill="#f00"/><path d="M116.8 295l2.200 -2.200l2.200 2.200l-2.200 2.200z" fill="#00f"/>
<path d="M372.8 142l3.200 -3.200l3.200 3.200l-3.200 3.200z" fill="#f00"/><path d="M373.8 142l2.200 -2.200l2.200 2.200l-2.200 2.200z" fill="#00f"/>
<path d="M596.8 451l3.200 -3.200l3.200 3.200l-3.200 3.200z" fill="#f00"/><path d="M597.8 451l2.200 -2.200l2.200 2.200l-2.200 2.200z" fill="#00f"/>
<path d="M809.8 317l3.200 -3.200l3.200 3.200l-3.200 3.200z" fill="#f00"/><path d="M810.8 317l2.200 -2.200l2.200 2.200l-2.200 2.200z" fill="#00f"/>
<path d="M1063.8 164l3.200 -3.200l3.200 3.200l-3.200 3.200z" fill="#f00"/><path d="M1064.8 164l2.200 -2.200l2.200 2.200l-2.200 2.200z" fill="#00f"/>
<path d="M110.8 310l3.200 -3.200l3.200 3.200l-3.200 3.200z" fill="#f00"/><path d="M111.8 310l2.200 -2.200l2.200 2.200l-2.200 2.200z" fill="#00f"/>
<path d="M311.8 253l3.200 -3.200l3.200 3.200l-3.200 3.200z" fill="#f00"/><path d="M312.8 253l2.200 -2.200l2.200 2.200l-2.200 2.200z" fill="#00f"/>
<path d="M526.8 182l3.200 -3.200l3.200 3.200l-3.200 3.200z" fill="#f00"/><path d="M527.8 182l2.200 -2.200l2.200 2.200l-2.200 2.200z" fill="#00f"/>
<path d="M742.8 100l3.200 -3.200l3.200 3.200l-3.200 3.200z" fill="#f00"/><path d="M743.8 100l2.200 -2.200l2.200 2.200l-2.200 2.200z" fill="#00f"/>
<path d="M942.8 469l3.200 -3.200l3.200 3.200l-3.200 3.200z" fill="#f00"/><path d="M943.8 469l2.200 -2.200l2.200 2.200l-2.200 2.200z" fill="#00f"/>
<path d="M267.8 204l3.200 -3.200l3.200 3.200l-3.200 3.200z" fill="#f00"/><path d="M268.8 204l2.200 -2.200l2.200 2.200l-2.200 2.200z" fill="#00f"/>
<path d="M180.8 290l3.200 -3.200l3.200 3.200l-3.200 3.200z" fill="#f00"/><path d="M181.8 290l2.200 -2.200l2.200 2.200l-2.200 2.200z" fill="#00f"/>
<path d="M873.8 494l3.200 -3.200l3.200 3.200l-3.200 3.200z" fill="#f00"/><path d="M874.8 494l2.200 -2.200l2.200 2.200l-2.200 2.200z" fill="#00f"/>
</g>
<text x="35" y="156.5" class="deg">300°</text><text x="35" y="280" class="deg">200°</text><text x="35" y="404" class="deg">100°</text><text x="57" y="528" class="deg">0°</text>
<path fill-rule="evenodd" fill="#ff8040" d="M67.35 297.30a8.25 7.90 0 1 0 16.50 0a8.25 7.90 0 1 0 -16.50 0zM71.05 297.30a4.55 5.25 0 1 0 9.10 0a4.55 5.25 0 1 0 -9.10 0z"/><ellipse cx="75.6" cy="297.3" rx="1.500" ry="1.100" fill="#ff8040"/>
<g stroke="#ff0000" fill="none"><circle cx="75.2" cy="324.0" r="6.050" stroke-width="2.500"/><path d="M79.5 319.5l4.700 -4.500" stroke-width="2.300"/></g><path d="M79.2 314.2h7v5.700z" fill="#ff0000"/>
<path fill-rule="evenodd" fill="#00ffff" d="M68.30 347.50a7.50 5.80 0 1 0 15.00 0a7.50 5.80 0 1 0 -15.00 0zM72.00 347.50a3.80 3.90 0 1 0 7.60 0a3.80 3.90 0 1 0 -7.60 0z"/><path d="M70.8 343.9q-1.800 -1.800 -1.200 -4.300M80.8 343.9q1.800 -1.800 1.200 -4.300" fill="none" stroke="#00ffff" stroke-width="2.300" stroke-linecap="round"/><path d="M75.8 352.8v6.300M71.1 355.6h9.100" fill="none" stroke="#00ffff" stroke-width="2.500"/>
<path fill-rule="evenodd" fill="#008000" d="M67.30 372.40a6.70 5.85 0 1 0 13.40 0a6.70 5.85 0 1 0 -13.40 0zM70.60 372.40a3.40 4.20 0 1 0 6.80 0a3.40 4.20 0 1 0 -6.80 0z"/><path d="M74.0 377.7v6.600M70.0 380.6h8" fill="none" stroke="#008000" stroke-width="2.400"/>
<g fill="none" stroke="#808080" stroke-width="1.900"><circle cx="75.8" cy="172.7" r="2.600"/><path d="M68.5 169.7a7.300 8.600 0 0 0 14.600 0" stroke-width="2.200"/><path d="M75.8 178.3v7.800M71.0 182.3h9.600"/></g>
<text x="68.27" y="117.20" font-family="Liberation Sans, sans-serif" font-weight="normal" font-size="18.41" fill="#a07c14" stroke="#a07c14" stroke-width="0.60" stroke-linejoin="round">Ψ</text><rect x="71.0" y="115" width="10" height="2" fill="#a07c14"/><rect x="75.0" y="113" width="2" height="7" fill="#a07c14"/>
<text x="63.50" y="277.95" font-family="DejaVu Sans, sans-serif" font-weight="bold" font-size="26.26" fill="#000" stroke="#000" stroke-width="0.50" stroke-linejoin="round">♄</text>
<path d="M67.3 455q1.500 -3.500 5 -3q4 1 2.500 5.500q-1.500 3.500 -7 6.500h14.500M78.2 451.500v17" fill="none" stroke="#0000ff" stroke-width="2.300"/>
<text x="64.72" y="523.40" font-family="DejaVu Sans, sans-serif" font-weight="bold" font-size="24.76" fill="#ff00ff" stroke="#ff00ff" stroke-width="0.60" stroke-linejoin="round">♅</text>
<path fill-rule="evenodd" fill="#ff8040" d="M1108.35 296.10a8.25 7.90 0 1 0 16.50 0a8.25 7.90 0 1 0 -16.50 0zM1112.05 296.10a4.55 5.25 0 1 0 9.10 0a4.55 5.25 0 1 0 -9.10 0z"/><ellipse cx="1116.6" cy="296.1" rx="1.500" ry="1.100" fill="#ff8040"/>
<g stroke="#ff0000" fill="none"><circle cx="1116.2" cy="324.0" r="6.050" stroke-width="2.500"/><path d="M1120.5 319.5l4.700 -4.500" stroke-width="2.300"/></g><path d="M1120.2 314.2h7v5.700z" fill="#ff0000"/>
<path fill-rule="evenodd" fill="#00ffff" d="M1109.30 345.95a7.50 5.80 0 1 0 15.00 0a7.50 5.80 0 1 0 -15.00 0zM1113.00 345.95a3.80 3.90 0 1 0 7.60 0a3.80 3.90 0 1 0 -7.60 0z"/><path d="M1111.8 342.3q-1.800 -1.800 -1.200 -4.300M1121.8 342.3q1.800 -1.800 1.200 -4.300" fill="none" stroke="#00ffff" stroke-width="2.300" stroke-linecap="round"/><path d="M1116.8 351.2v6.300M1112.1 354.1h9.100" fill="none" stroke="#00ffff" stroke-width="2.500"/>
<path fill-rule="evenodd" fill="#008000" d="M1108.30 371.75a6.70 5.85 0 1 0 13.40 0a6.70 5.85 0 1 0 -13.40 0zM1111.60 371.75a3.40 4.20 0 1 0 6.80 0a3.40 4.20 0 1 0 -6.80 0z"/><path d="M1115.0 377.1v6.600M1111.0 380.0h8" fill="none" stroke="#008000" stroke-width="2.400"/>
<g fill="none" stroke="#808080" stroke-width="1.900"><circle cx="1116.8" cy="172.7" r="2.600"/><path d="M1109.5 169.7a7.300 8.600 0 0 0 14.600 0" stroke-width="2.200"/><path d="M1116.8 178.3v7.800M1112.0 182.3h9.600"/></g>
<text x="1109.27" y="117.20" font-family="Liberation Sans, sans-serif" font-weight="normal" font-size="18.41" fill="#a07c14" stroke="#a07c14" stroke-width="0.60" stroke-linejoin="round">Ψ</text><rect x="1112.0" y="115" width="10" height="2" fill="#a07c14"/><rect x="1116.0" y="113" width="2" height="7" fill="#a07c14"/>
<text x="1104.50" y="276.95" font-family="DejaVu Sans, sans-serif" font-weight="bold" font-size="26.26" fill="#000" stroke="#000" stroke-width="0.50" stroke-linejoin="round">♄</text>
<path d="M1108.3 455q1.500 -3.500 5 -3q4 1 2.500 5.500q-1.500 3.500 -7 6.500h14.500M1119.2 451.500v17" fill="none" stroke="#0000ff" stroke-width="2.300"/>
<text x="1105.72" y="523.40" font-family="DejaVu Sans, sans-serif" font-weight="bold" font-size="24.76" fill="#ff00ff" stroke="#ff00ff" stroke-width="0.60" stroke-linejoin="round">♅</text>
<text transform="translate(72.70 0) scale(0.733 1) translate(-72.70 0)" x="63.50" y="492.85" font-family="DejaVu Sans, sans-serif" font-weight="normal" font-size="20.68" fill="#00ffff" stroke="#00ffff" stroke-width="0.30" stroke-linejoin="round">☊</text>
<ellipse cx="103.500" cy="328" rx="60.500" ry="68" fill="none" stroke="#707070" stroke-width="3.500" opacity=".5" filter="url(#sh)"/>
<ellipse cx="100.300" cy="324.300" rx="60.500" ry="68" fill="none" stroke="#ff9a1a" stroke-width="2.200"/>
</svg>
<div class="a" style="left:293px;top:332px;width:126px;height:117px;background:#d4d0c8;border:1px solid;border-color:#d4d0c8 #404040 #404040 #d4d0c8;box-shadow:inset 1px 1px 0 #fff,inset -1px -1px 0 #808080"></div>
<div class="a" style="left:297px;top:336px;width:118px;height:15px;background:linear-gradient(90deg,#0a246a,#a6caf0)"></div>
<div class="t" style="left:300px;top:338px;font-size:12px;font-weight:bold;transform:scaleX(1.0095);transform-origin:0 0;color:#fff;">20.03.2012</div>
<div class="a btn" style="left:403px;top:338px;width:10px;height:11px"></div>
<svg class="a" style="left:404px;top:339px" width="8" height="8" viewBox="0 0 8 8"><path d="M1 1l6 6M7 1l-6 6" stroke="#000" stroke-width="1"/></svg>
<div class="a field" style="left:297px;top:352px;width:119px;height:93px"></div>
<div class="a" style="left:299px;top:354px;width:114px;height:14px;background:#3399ff;outline:1px dotted #ff80c0;outline-offset:-1px"></div>
<svg class="a" style="left:299px;top:354px" width="5" height="14" viewBox="0 0 5 14"><path d="M0 0l4 7l-4 7z" fill="#f00"/></svg>
<div class="t" style="left:342.3px;top:354.5px;font-size:12px;transform:scaleX(0.9563);transform-origin:0 0;">NAT</div>
<svg class="a" style="left:0;top:0" width="1186" height="681" viewBox="0 0 1186 681">
<text x="305.84" y="365.10" font-family="DejaVu Sans, sans-serif" font-weight="bold" font-size="12.38" fill="#000" stroke="#000" stroke-width="0.40" stroke-linejoin="round">☿</text>
<text x="318.58" y="365.00" font-family="DejaVu Sans, sans-serif" font-weight="normal" font-size="9.45" fill="#000" stroke="#000" stroke-width="0.30" stroke-linejoin="round">☌</text>
<text x="329.56" y="365.25" font-family="DejaVu Sans, sans-serif" font-weight="normal" font-size="10.48" fill="#000" stroke="#000" stroke-width="1.10" stroke-linejoin="round">☉</text>
<text x="304.39" y="379.43" font-family="DejaVu Sans, sans-serif" font-weight="bold" font-size="11.08" fill="#000" stroke="#000" stroke-width="0.40" stroke-linejoin="round">♂</text>
<text x="318.83" y="379.80" font-family="DejaVu Sans, sans-serif" font-weight="normal" font-size="9.45" fill="#000" stroke="#000" stroke-width="0.30" stroke-linejoin="round">☌</text>
<text x="330.30" y="379.45" font-family="DejaVu Sans, sans-serif" font-weight="bold" font-size="12.86" fill="#000" stroke="#000" stroke-width="0.40" stroke-linejoin="round">☿</text>
</svg>
</body></html>
